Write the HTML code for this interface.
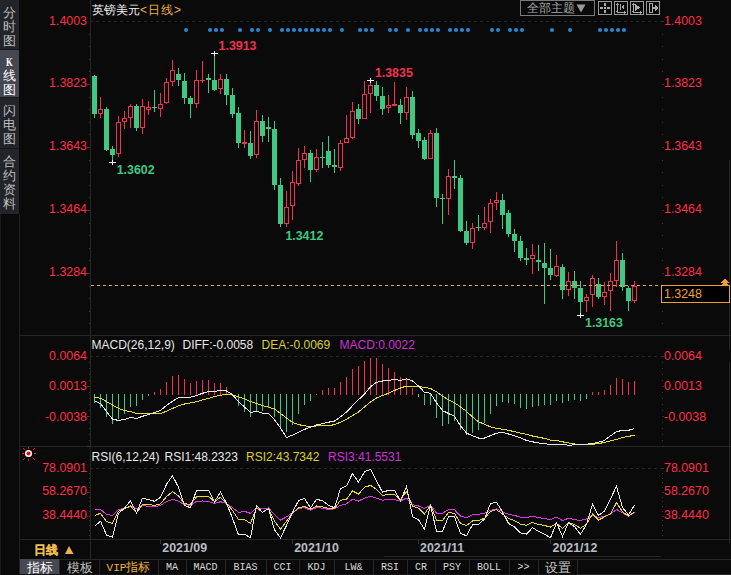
<!DOCTYPE html>
<html><head><meta charset="utf-8"><style>
html,body{margin:0;padding:0;background:#0a0a0a;}
#root{position:relative;width:731px;height:575px;overflow:hidden;background:#0a0a0a;font-family:"Liberation Sans", sans-serif;}
.t{position:absolute;white-space:nowrap;line-height:14px;}
svg{display:block}
</style></head><body><div id="root">
<svg style="position:absolute;left:0;top:0" width="731" height="575" shape-rendering="crispEdges">
<rect x="0" y="0" width="19" height="214" fill="#23242a"/>
<rect x="0" y="49" width="19" height="1" fill="#17181c"/>
<rect x="0" y="50" width="19" height="47" fill="#454752"/>
<rect x="0" y="97" width="19" height="1" fill="#17181c"/>
<rect x="0" y="148" width="19" height="1" fill="#17181c"/>
<rect x="0" y="214" width="1" height="361" fill="#1c1c1c"/>
<rect x="19" y="214" width="1" height="361" fill="#222222"/>
<rect x="90" y="0" width="1" height="559" fill="#262626"/>
<rect x="19" y="335" width="712" height="1" fill="#262626"/>
<rect x="19" y="446" width="712" height="1" fill="#262626"/>
<rect x="19" y="539" width="712" height="1" fill="#262626"/>
<rect x="19" y="559" width="712" height="1" fill="#262626"/>
<rect x="384" y="556" width="277" height="1" fill="#262626"/>
<rect x="729" y="160" width="1" height="190" fill="#262626"/>
<rect x="729" y="362" width="1" height="181" fill="#262626"/>
<rect x="577" y="574" width="154" height="1" fill="#262626"/>
<rect x="90" y="21" width="3" height="1" fill="#262626"/>
<rect x="96" y="21" width="3" height="1" fill="#262626"/>
<rect x="102" y="21" width="3" height="1" fill="#262626"/>
<rect x="108" y="21" width="3" height="1" fill="#262626"/>
<rect x="114" y="21" width="3" height="1" fill="#262626"/>
<rect x="120" y="21" width="3" height="1" fill="#262626"/>
<rect x="126" y="21" width="3" height="1" fill="#262626"/>
<rect x="132" y="21" width="3" height="1" fill="#262626"/>
<rect x="138" y="21" width="3" height="1" fill="#262626"/>
<rect x="144" y="21" width="3" height="1" fill="#262626"/>
<rect x="150" y="21" width="3" height="1" fill="#262626"/>
<rect x="156" y="21" width="3" height="1" fill="#262626"/>
<rect x="162" y="21" width="3" height="1" fill="#262626"/>
<rect x="168" y="21" width="3" height="1" fill="#262626"/>
<rect x="174" y="21" width="3" height="1" fill="#262626"/>
<rect x="180" y="21" width="3" height="1" fill="#262626"/>
<rect x="186" y="21" width="3" height="1" fill="#262626"/>
<rect x="192" y="21" width="3" height="1" fill="#262626"/>
<rect x="198" y="21" width="3" height="1" fill="#262626"/>
<rect x="204" y="21" width="3" height="1" fill="#262626"/>
<rect x="210" y="21" width="3" height="1" fill="#262626"/>
<rect x="216" y="21" width="3" height="1" fill="#262626"/>
<rect x="222" y="21" width="3" height="1" fill="#262626"/>
<rect x="228" y="21" width="3" height="1" fill="#262626"/>
<rect x="234" y="21" width="3" height="1" fill="#262626"/>
<rect x="240" y="21" width="3" height="1" fill="#262626"/>
<rect x="246" y="21" width="3" height="1" fill="#262626"/>
<rect x="252" y="21" width="3" height="1" fill="#262626"/>
<rect x="258" y="21" width="3" height="1" fill="#262626"/>
<rect x="264" y="21" width="3" height="1" fill="#262626"/>
<rect x="270" y="21" width="3" height="1" fill="#262626"/>
<rect x="276" y="21" width="3" height="1" fill="#262626"/>
<rect x="282" y="21" width="3" height="1" fill="#262626"/>
<rect x="288" y="21" width="3" height="1" fill="#262626"/>
<rect x="294" y="21" width="3" height="1" fill="#262626"/>
<rect x="300" y="21" width="3" height="1" fill="#262626"/>
<rect x="306" y="21" width="3" height="1" fill="#262626"/>
<rect x="312" y="21" width="3" height="1" fill="#262626"/>
<rect x="318" y="21" width="3" height="1" fill="#262626"/>
<rect x="324" y="21" width="3" height="1" fill="#262626"/>
<rect x="330" y="21" width="3" height="1" fill="#262626"/>
<rect x="336" y="21" width="3" height="1" fill="#262626"/>
<rect x="342" y="21" width="3" height="1" fill="#262626"/>
<rect x="348" y="21" width="3" height="1" fill="#262626"/>
<rect x="354" y="21" width="3" height="1" fill="#262626"/>
<rect x="360" y="21" width="3" height="1" fill="#262626"/>
<rect x="366" y="21" width="3" height="1" fill="#262626"/>
<rect x="372" y="21" width="3" height="1" fill="#262626"/>
<rect x="378" y="21" width="3" height="1" fill="#262626"/>
<rect x="384" y="21" width="3" height="1" fill="#262626"/>
<rect x="390" y="21" width="3" height="1" fill="#262626"/>
<rect x="396" y="21" width="3" height="1" fill="#262626"/>
<rect x="402" y="21" width="3" height="1" fill="#262626"/>
<rect x="408" y="21" width="3" height="1" fill="#262626"/>
<rect x="414" y="21" width="3" height="1" fill="#262626"/>
<rect x="420" y="21" width="3" height="1" fill="#262626"/>
<rect x="426" y="21" width="3" height="1" fill="#262626"/>
<rect x="432" y="21" width="3" height="1" fill="#262626"/>
<rect x="438" y="21" width="3" height="1" fill="#262626"/>
<rect x="444" y="21" width="3" height="1" fill="#262626"/>
<rect x="450" y="21" width="3" height="1" fill="#262626"/>
<rect x="456" y="21" width="3" height="1" fill="#262626"/>
<rect x="462" y="21" width="3" height="1" fill="#262626"/>
<rect x="468" y="21" width="3" height="1" fill="#262626"/>
<rect x="474" y="21" width="3" height="1" fill="#262626"/>
<rect x="480" y="21" width="3" height="1" fill="#262626"/>
<rect x="486" y="21" width="3" height="1" fill="#262626"/>
<rect x="492" y="21" width="3" height="1" fill="#262626"/>
<rect x="498" y="21" width="3" height="1" fill="#262626"/>
<rect x="504" y="21" width="3" height="1" fill="#262626"/>
<rect x="510" y="21" width="3" height="1" fill="#262626"/>
<rect x="516" y="21" width="3" height="1" fill="#262626"/>
<rect x="522" y="21" width="3" height="1" fill="#262626"/>
<rect x="528" y="21" width="3" height="1" fill="#262626"/>
<rect x="534" y="21" width="3" height="1" fill="#262626"/>
<rect x="540" y="21" width="3" height="1" fill="#262626"/>
<rect x="546" y="21" width="3" height="1" fill="#262626"/>
<rect x="552" y="21" width="3" height="1" fill="#262626"/>
<rect x="558" y="21" width="3" height="1" fill="#262626"/>
<rect x="564" y="21" width="3" height="1" fill="#262626"/>
<rect x="570" y="21" width="3" height="1" fill="#262626"/>
<rect x="576" y="21" width="3" height="1" fill="#262626"/>
<rect x="582" y="21" width="3" height="1" fill="#262626"/>
<rect x="588" y="21" width="3" height="1" fill="#262626"/>
<rect x="594" y="21" width="3" height="1" fill="#262626"/>
<rect x="600" y="21" width="3" height="1" fill="#262626"/>
<rect x="606" y="21" width="3" height="1" fill="#262626"/>
<rect x="612" y="21" width="3" height="1" fill="#262626"/>
<rect x="618" y="21" width="3" height="1" fill="#262626"/>
<rect x="624" y="21" width="3" height="1" fill="#262626"/>
<rect x="630" y="21" width="3" height="1" fill="#262626"/>
<rect x="636" y="21" width="3" height="1" fill="#262626"/>
<rect x="642" y="21" width="3" height="1" fill="#262626"/>
<rect x="648" y="21" width="3" height="1" fill="#262626"/>
<rect x="654" y="21" width="3" height="1" fill="#262626"/>
<rect x="660" y="21" width="3" height="1" fill="#262626"/>
<rect x="90" y="356" width="3" height="1" fill="#262626"/>
<rect x="96" y="356" width="3" height="1" fill="#262626"/>
<rect x="102" y="356" width="3" height="1" fill="#262626"/>
<rect x="108" y="356" width="3" height="1" fill="#262626"/>
<rect x="114" y="356" width="3" height="1" fill="#262626"/>
<rect x="120" y="356" width="3" height="1" fill="#262626"/>
<rect x="126" y="356" width="3" height="1" fill="#262626"/>
<rect x="132" y="356" width="3" height="1" fill="#262626"/>
<rect x="138" y="356" width="3" height="1" fill="#262626"/>
<rect x="144" y="356" width="3" height="1" fill="#262626"/>
<rect x="150" y="356" width="3" height="1" fill="#262626"/>
<rect x="156" y="356" width="3" height="1" fill="#262626"/>
<rect x="162" y="356" width="3" height="1" fill="#262626"/>
<rect x="168" y="356" width="3" height="1" fill="#262626"/>
<rect x="174" y="356" width="3" height="1" fill="#262626"/>
<rect x="180" y="356" width="3" height="1" fill="#262626"/>
<rect x="186" y="356" width="3" height="1" fill="#262626"/>
<rect x="192" y="356" width="3" height="1" fill="#262626"/>
<rect x="198" y="356" width="3" height="1" fill="#262626"/>
<rect x="204" y="356" width="3" height="1" fill="#262626"/>
<rect x="210" y="356" width="3" height="1" fill="#262626"/>
<rect x="216" y="356" width="3" height="1" fill="#262626"/>
<rect x="222" y="356" width="3" height="1" fill="#262626"/>
<rect x="228" y="356" width="3" height="1" fill="#262626"/>
<rect x="234" y="356" width="3" height="1" fill="#262626"/>
<rect x="240" y="356" width="3" height="1" fill="#262626"/>
<rect x="246" y="356" width="3" height="1" fill="#262626"/>
<rect x="252" y="356" width="3" height="1" fill="#262626"/>
<rect x="258" y="356" width="3" height="1" fill="#262626"/>
<rect x="264" y="356" width="3" height="1" fill="#262626"/>
<rect x="270" y="356" width="3" height="1" fill="#262626"/>
<rect x="276" y="356" width="3" height="1" fill="#262626"/>
<rect x="282" y="356" width="3" height="1" fill="#262626"/>
<rect x="288" y="356" width="3" height="1" fill="#262626"/>
<rect x="294" y="356" width="3" height="1" fill="#262626"/>
<rect x="300" y="356" width="3" height="1" fill="#262626"/>
<rect x="306" y="356" width="3" height="1" fill="#262626"/>
<rect x="312" y="356" width="3" height="1" fill="#262626"/>
<rect x="318" y="356" width="3" height="1" fill="#262626"/>
<rect x="324" y="356" width="3" height="1" fill="#262626"/>
<rect x="330" y="356" width="3" height="1" fill="#262626"/>
<rect x="336" y="356" width="3" height="1" fill="#262626"/>
<rect x="342" y="356" width="3" height="1" fill="#262626"/>
<rect x="348" y="356" width="3" height="1" fill="#262626"/>
<rect x="354" y="356" width="3" height="1" fill="#262626"/>
<rect x="360" y="356" width="3" height="1" fill="#262626"/>
<rect x="366" y="356" width="3" height="1" fill="#262626"/>
<rect x="372" y="356" width="3" height="1" fill="#262626"/>
<rect x="378" y="356" width="3" height="1" fill="#262626"/>
<rect x="384" y="356" width="3" height="1" fill="#262626"/>
<rect x="390" y="356" width="3" height="1" fill="#262626"/>
<rect x="396" y="356" width="3" height="1" fill="#262626"/>
<rect x="402" y="356" width="3" height="1" fill="#262626"/>
<rect x="408" y="356" width="3" height="1" fill="#262626"/>
<rect x="414" y="356" width="3" height="1" fill="#262626"/>
<rect x="420" y="356" width="3" height="1" fill="#262626"/>
<rect x="426" y="356" width="3" height="1" fill="#262626"/>
<rect x="432" y="356" width="3" height="1" fill="#262626"/>
<rect x="438" y="356" width="3" height="1" fill="#262626"/>
<rect x="444" y="356" width="3" height="1" fill="#262626"/>
<rect x="450" y="356" width="3" height="1" fill="#262626"/>
<rect x="456" y="356" width="3" height="1" fill="#262626"/>
<rect x="462" y="356" width="3" height="1" fill="#262626"/>
<rect x="468" y="356" width="3" height="1" fill="#262626"/>
<rect x="474" y="356" width="3" height="1" fill="#262626"/>
<rect x="480" y="356" width="3" height="1" fill="#262626"/>
<rect x="486" y="356" width="3" height="1" fill="#262626"/>
<rect x="492" y="356" width="3" height="1" fill="#262626"/>
<rect x="498" y="356" width="3" height="1" fill="#262626"/>
<rect x="504" y="356" width="3" height="1" fill="#262626"/>
<rect x="510" y="356" width="3" height="1" fill="#262626"/>
<rect x="516" y="356" width="3" height="1" fill="#262626"/>
<rect x="522" y="356" width="3" height="1" fill="#262626"/>
<rect x="528" y="356" width="3" height="1" fill="#262626"/>
<rect x="534" y="356" width="3" height="1" fill="#262626"/>
<rect x="540" y="356" width="3" height="1" fill="#262626"/>
<rect x="546" y="356" width="3" height="1" fill="#262626"/>
<rect x="552" y="356" width="3" height="1" fill="#262626"/>
<rect x="558" y="356" width="3" height="1" fill="#262626"/>
<rect x="564" y="356" width="3" height="1" fill="#262626"/>
<rect x="570" y="356" width="3" height="1" fill="#262626"/>
<rect x="576" y="356" width="3" height="1" fill="#262626"/>
<rect x="582" y="356" width="3" height="1" fill="#262626"/>
<rect x="588" y="356" width="3" height="1" fill="#262626"/>
<rect x="594" y="356" width="3" height="1" fill="#262626"/>
<rect x="600" y="356" width="3" height="1" fill="#262626"/>
<rect x="606" y="356" width="3" height="1" fill="#262626"/>
<rect x="612" y="356" width="3" height="1" fill="#262626"/>
<rect x="618" y="356" width="3" height="1" fill="#262626"/>
<rect x="624" y="356" width="3" height="1" fill="#262626"/>
<rect x="630" y="356" width="3" height="1" fill="#262626"/>
<rect x="636" y="356" width="3" height="1" fill="#262626"/>
<rect x="642" y="356" width="3" height="1" fill="#262626"/>
<rect x="648" y="356" width="3" height="1" fill="#262626"/>
<rect x="654" y="356" width="3" height="1" fill="#262626"/>
<rect x="660" y="356" width="3" height="1" fill="#262626"/>
<rect x="90" y="468" width="3" height="1" fill="#262626"/>
<rect x="96" y="468" width="3" height="1" fill="#262626"/>
<rect x="102" y="468" width="3" height="1" fill="#262626"/>
<rect x="108" y="468" width="3" height="1" fill="#262626"/>
<rect x="114" y="468" width="3" height="1" fill="#262626"/>
<rect x="120" y="468" width="3" height="1" fill="#262626"/>
<rect x="126" y="468" width="3" height="1" fill="#262626"/>
<rect x="132" y="468" width="3" height="1" fill="#262626"/>
<rect x="138" y="468" width="3" height="1" fill="#262626"/>
<rect x="144" y="468" width="3" height="1" fill="#262626"/>
<rect x="150" y="468" width="3" height="1" fill="#262626"/>
<rect x="156" y="468" width="3" height="1" fill="#262626"/>
<rect x="162" y="468" width="3" height="1" fill="#262626"/>
<rect x="168" y="468" width="3" height="1" fill="#262626"/>
<rect x="174" y="468" width="3" height="1" fill="#262626"/>
<rect x="180" y="468" width="3" height="1" fill="#262626"/>
<rect x="186" y="468" width="3" height="1" fill="#262626"/>
<rect x="192" y="468" width="3" height="1" fill="#262626"/>
<rect x="198" y="468" width="3" height="1" fill="#262626"/>
<rect x="204" y="468" width="3" height="1" fill="#262626"/>
<rect x="210" y="468" width="3" height="1" fill="#262626"/>
<rect x="216" y="468" width="3" height="1" fill="#262626"/>
<rect x="222" y="468" width="3" height="1" fill="#262626"/>
<rect x="228" y="468" width="3" height="1" fill="#262626"/>
<rect x="234" y="468" width="3" height="1" fill="#262626"/>
<rect x="240" y="468" width="3" height="1" fill="#262626"/>
<rect x="246" y="468" width="3" height="1" fill="#262626"/>
<rect x="252" y="468" width="3" height="1" fill="#262626"/>
<rect x="258" y="468" width="3" height="1" fill="#262626"/>
<rect x="264" y="468" width="3" height="1" fill="#262626"/>
<rect x="270" y="468" width="3" height="1" fill="#262626"/>
<rect x="276" y="468" width="3" height="1" fill="#262626"/>
<rect x="282" y="468" width="3" height="1" fill="#262626"/>
<rect x="288" y="468" width="3" height="1" fill="#262626"/>
<rect x="294" y="468" width="3" height="1" fill="#262626"/>
<rect x="300" y="468" width="3" height="1" fill="#262626"/>
<rect x="306" y="468" width="3" height="1" fill="#262626"/>
<rect x="312" y="468" width="3" height="1" fill="#262626"/>
<rect x="318" y="468" width="3" height="1" fill="#262626"/>
<rect x="324" y="468" width="3" height="1" fill="#262626"/>
<rect x="330" y="468" width="3" height="1" fill="#262626"/>
<rect x="336" y="468" width="3" height="1" fill="#262626"/>
<rect x="342" y="468" width="3" height="1" fill="#262626"/>
<rect x="348" y="468" width="3" height="1" fill="#262626"/>
<rect x="354" y="468" width="3" height="1" fill="#262626"/>
<rect x="360" y="468" width="3" height="1" fill="#262626"/>
<rect x="366" y="468" width="3" height="1" fill="#262626"/>
<rect x="372" y="468" width="3" height="1" fill="#262626"/>
<rect x="378" y="468" width="3" height="1" fill="#262626"/>
<rect x="384" y="468" width="3" height="1" fill="#262626"/>
<rect x="390" y="468" width="3" height="1" fill="#262626"/>
<rect x="396" y="468" width="3" height="1" fill="#262626"/>
<rect x="402" y="468" width="3" height="1" fill="#262626"/>
<rect x="408" y="468" width="3" height="1" fill="#262626"/>
<rect x="414" y="468" width="3" height="1" fill="#262626"/>
<rect x="420" y="468" width="3" height="1" fill="#262626"/>
<rect x="426" y="468" width="3" height="1" fill="#262626"/>
<rect x="432" y="468" width="3" height="1" fill="#262626"/>
<rect x="438" y="468" width="3" height="1" fill="#262626"/>
<rect x="444" y="468" width="3" height="1" fill="#262626"/>
<rect x="450" y="468" width="3" height="1" fill="#262626"/>
<rect x="456" y="468" width="3" height="1" fill="#262626"/>
<rect x="462" y="468" width="3" height="1" fill="#262626"/>
<rect x="468" y="468" width="3" height="1" fill="#262626"/>
<rect x="474" y="468" width="3" height="1" fill="#262626"/>
<rect x="480" y="468" width="3" height="1" fill="#262626"/>
<rect x="486" y="468" width="3" height="1" fill="#262626"/>
<rect x="492" y="468" width="3" height="1" fill="#262626"/>
<rect x="498" y="468" width="3" height="1" fill="#262626"/>
<rect x="504" y="468" width="3" height="1" fill="#262626"/>
<rect x="510" y="468" width="3" height="1" fill="#262626"/>
<rect x="516" y="468" width="3" height="1" fill="#262626"/>
<rect x="522" y="468" width="3" height="1" fill="#262626"/>
<rect x="528" y="468" width="3" height="1" fill="#262626"/>
<rect x="534" y="468" width="3" height="1" fill="#262626"/>
<rect x="540" y="468" width="3" height="1" fill="#262626"/>
<rect x="546" y="468" width="3" height="1" fill="#262626"/>
<rect x="552" y="468" width="3" height="1" fill="#262626"/>
<rect x="558" y="468" width="3" height="1" fill="#262626"/>
<rect x="564" y="468" width="3" height="1" fill="#262626"/>
<rect x="570" y="468" width="3" height="1" fill="#262626"/>
<rect x="576" y="468" width="3" height="1" fill="#262626"/>
<rect x="582" y="468" width="3" height="1" fill="#262626"/>
<rect x="588" y="468" width="3" height="1" fill="#262626"/>
<rect x="594" y="468" width="3" height="1" fill="#262626"/>
<rect x="600" y="468" width="3" height="1" fill="#262626"/>
<rect x="606" y="468" width="3" height="1" fill="#262626"/>
<rect x="612" y="468" width="3" height="1" fill="#262626"/>
<rect x="618" y="468" width="3" height="1" fill="#262626"/>
<rect x="624" y="468" width="3" height="1" fill="#262626"/>
<rect x="630" y="468" width="3" height="1" fill="#262626"/>
<rect x="636" y="468" width="3" height="1" fill="#262626"/>
<rect x="642" y="468" width="3" height="1" fill="#262626"/>
<rect x="648" y="468" width="3" height="1" fill="#262626"/>
<rect x="654" y="468" width="3" height="1" fill="#262626"/>
<rect x="660" y="468" width="3" height="1" fill="#262626"/>
<rect x="662" y="21" width="2" height="1" fill="#333333"/>
<rect x="89" y="34" width="1" height="1" fill="#3a3a3a"/>
<rect x="662" y="34" width="1" height="1" fill="#3a3a3a"/>
<rect x="89" y="46" width="1" height="1" fill="#3a3a3a"/>
<rect x="662" y="46" width="1" height="1" fill="#3a3a3a"/>
<rect x="89" y="59" width="1" height="1" fill="#3a3a3a"/>
<rect x="662" y="59" width="1" height="1" fill="#3a3a3a"/>
<rect x="89" y="71" width="1" height="1" fill="#3a3a3a"/>
<rect x="662" y="71" width="1" height="1" fill="#3a3a3a"/>
<rect x="87" y="84" width="3" height="1" fill="#3a3a3a"/>
<rect x="662" y="84" width="2" height="1" fill="#333333"/>
<rect x="89" y="97" width="1" height="1" fill="#3a3a3a"/>
<rect x="662" y="97" width="1" height="1" fill="#3a3a3a"/>
<rect x="89" y="109" width="1" height="1" fill="#3a3a3a"/>
<rect x="662" y="109" width="1" height="1" fill="#3a3a3a"/>
<rect x="89" y="122" width="1" height="1" fill="#3a3a3a"/>
<rect x="662" y="122" width="1" height="1" fill="#3a3a3a"/>
<rect x="89" y="134" width="1" height="1" fill="#3a3a3a"/>
<rect x="662" y="134" width="1" height="1" fill="#3a3a3a"/>
<rect x="87" y="147" width="3" height="1" fill="#3a3a3a"/>
<rect x="662" y="147" width="2" height="1" fill="#333333"/>
<rect x="89" y="160" width="1" height="1" fill="#3a3a3a"/>
<rect x="662" y="160" width="1" height="1" fill="#3a3a3a"/>
<rect x="89" y="172" width="1" height="1" fill="#3a3a3a"/>
<rect x="662" y="172" width="1" height="1" fill="#3a3a3a"/>
<rect x="89" y="185" width="1" height="1" fill="#3a3a3a"/>
<rect x="662" y="185" width="1" height="1" fill="#3a3a3a"/>
<rect x="89" y="197" width="1" height="1" fill="#3a3a3a"/>
<rect x="662" y="197" width="1" height="1" fill="#3a3a3a"/>
<rect x="87" y="210" width="3" height="1" fill="#3a3a3a"/>
<rect x="662" y="210" width="2" height="1" fill="#333333"/>
<rect x="89" y="223" width="1" height="1" fill="#3a3a3a"/>
<rect x="662" y="223" width="1" height="1" fill="#3a3a3a"/>
<rect x="89" y="235" width="1" height="1" fill="#3a3a3a"/>
<rect x="662" y="235" width="1" height="1" fill="#3a3a3a"/>
<rect x="89" y="248" width="1" height="1" fill="#3a3a3a"/>
<rect x="662" y="248" width="1" height="1" fill="#3a3a3a"/>
<rect x="89" y="260" width="1" height="1" fill="#3a3a3a"/>
<rect x="662" y="260" width="1" height="1" fill="#3a3a3a"/>
<rect x="87" y="273" width="3" height="1" fill="#3a3a3a"/>
<rect x="662" y="273" width="2" height="1" fill="#333333"/>
<rect x="89" y="286" width="1" height="1" fill="#3a3a3a"/>
<rect x="662" y="286" width="1" height="1" fill="#3a3a3a"/>
<rect x="89" y="298" width="1" height="1" fill="#3a3a3a"/>
<rect x="662" y="298" width="1" height="1" fill="#3a3a3a"/>
<rect x="89" y="311" width="1" height="1" fill="#3a3a3a"/>
<rect x="662" y="311" width="1" height="1" fill="#3a3a3a"/>
<rect x="89" y="323" width="1" height="1" fill="#3a3a3a"/>
<rect x="662" y="323" width="1" height="1" fill="#3a3a3a"/>
<rect x="662" y="356" width="2" height="1" fill="#333333"/>
<rect x="89" y="362" width="1" height="1" fill="#3a3a3a"/>
<rect x="662" y="362" width="1" height="1" fill="#3a3a3a"/>
<rect x="89" y="368" width="1" height="1" fill="#3a3a3a"/>
<rect x="662" y="368" width="1" height="1" fill="#3a3a3a"/>
<rect x="89" y="374" width="1" height="1" fill="#3a3a3a"/>
<rect x="662" y="374" width="1" height="1" fill="#3a3a3a"/>
<rect x="89" y="380" width="1" height="1" fill="#3a3a3a"/>
<rect x="662" y="380" width="1" height="1" fill="#3a3a3a"/>
<rect x="87" y="386" width="3" height="1" fill="#3a3a3a"/>
<rect x="662" y="386" width="2" height="1" fill="#333333"/>
<rect x="89" y="392" width="1" height="1" fill="#3a3a3a"/>
<rect x="662" y="392" width="1" height="1" fill="#3a3a3a"/>
<rect x="89" y="398" width="1" height="1" fill="#3a3a3a"/>
<rect x="662" y="398" width="1" height="1" fill="#3a3a3a"/>
<rect x="89" y="404" width="1" height="1" fill="#3a3a3a"/>
<rect x="662" y="404" width="1" height="1" fill="#3a3a3a"/>
<rect x="89" y="410" width="1" height="1" fill="#3a3a3a"/>
<rect x="662" y="410" width="1" height="1" fill="#3a3a3a"/>
<rect x="87" y="416" width="3" height="1" fill="#3a3a3a"/>
<rect x="662" y="416" width="2" height="1" fill="#333333"/>
<rect x="89" y="422" width="1" height="1" fill="#3a3a3a"/>
<rect x="662" y="422" width="1" height="1" fill="#3a3a3a"/>
<rect x="89" y="428" width="1" height="1" fill="#3a3a3a"/>
<rect x="662" y="428" width="1" height="1" fill="#3a3a3a"/>
<rect x="89" y="434" width="1" height="1" fill="#3a3a3a"/>
<rect x="662" y="434" width="1" height="1" fill="#3a3a3a"/>
<rect x="89" y="440" width="1" height="1" fill="#3a3a3a"/>
<rect x="662" y="440" width="1" height="1" fill="#3a3a3a"/>
<rect x="87" y="446" width="3" height="1" fill="#3a3a3a"/>
<rect x="662" y="446" width="2" height="1" fill="#333333"/>
<rect x="662" y="468" width="2" height="1" fill="#333333"/>
<rect x="89" y="473" width="1" height="1" fill="#3a3a3a"/>
<rect x="662" y="473" width="1" height="1" fill="#3a3a3a"/>
<rect x="89" y="478" width="1" height="1" fill="#3a3a3a"/>
<rect x="662" y="478" width="1" height="1" fill="#3a3a3a"/>
<rect x="89" y="482" width="1" height="1" fill="#3a3a3a"/>
<rect x="662" y="482" width="1" height="1" fill="#3a3a3a"/>
<rect x="89" y="487" width="1" height="1" fill="#3a3a3a"/>
<rect x="662" y="487" width="1" height="1" fill="#3a3a3a"/>
<rect x="87" y="492" width="3" height="1" fill="#3a3a3a"/>
<rect x="662" y="492" width="2" height="1" fill="#333333"/>
<rect x="89" y="497" width="1" height="1" fill="#3a3a3a"/>
<rect x="662" y="497" width="1" height="1" fill="#3a3a3a"/>
<rect x="89" y="501" width="1" height="1" fill="#3a3a3a"/>
<rect x="662" y="501" width="1" height="1" fill="#3a3a3a"/>
<rect x="89" y="506" width="1" height="1" fill="#3a3a3a"/>
<rect x="662" y="506" width="1" height="1" fill="#3a3a3a"/>
<rect x="89" y="511" width="1" height="1" fill="#3a3a3a"/>
<rect x="662" y="511" width="1" height="1" fill="#3a3a3a"/>
<rect x="87" y="516" width="3" height="1" fill="#3a3a3a"/>
<rect x="662" y="516" width="2" height="1" fill="#333333"/>
<rect x="89" y="520" width="1" height="1" fill="#3a3a3a"/>
<rect x="662" y="520" width="1" height="1" fill="#3a3a3a"/>
<rect x="89" y="525" width="1" height="1" fill="#3a3a3a"/>
<rect x="662" y="525" width="1" height="1" fill="#3a3a3a"/>
<rect x="89" y="530" width="1" height="1" fill="#3a3a3a"/>
<rect x="662" y="530" width="1" height="1" fill="#3a3a3a"/>
<rect x="89" y="535" width="1" height="1" fill="#3a3a3a"/>
<rect x="662" y="535" width="1" height="1" fill="#3a3a3a"/>
<circle cx="186" cy="30" r="2" fill="#2a8ad8" shape-rendering="geometricPrecision"/>
<circle cx="210" cy="30" r="2" fill="#2a8ad8" shape-rendering="geometricPrecision"/>
<circle cx="216" cy="30" r="2" fill="#2a8ad8" shape-rendering="geometricPrecision"/>
<circle cx="222" cy="30" r="2" fill="#2a8ad8" shape-rendering="geometricPrecision"/>
<circle cx="240" cy="30" r="2" fill="#2a8ad8" shape-rendering="geometricPrecision"/>
<circle cx="252" cy="30" r="2" fill="#2a8ad8" shape-rendering="geometricPrecision"/>
<circle cx="258" cy="30" r="2" fill="#2a8ad8" shape-rendering="geometricPrecision"/>
<circle cx="270" cy="30" r="2" fill="#2a8ad8" shape-rendering="geometricPrecision"/>
<circle cx="282" cy="30" r="2" fill="#2a8ad8" shape-rendering="geometricPrecision"/>
<circle cx="288" cy="30" r="2" fill="#2a8ad8" shape-rendering="geometricPrecision"/>
<circle cx="294" cy="30" r="2" fill="#2a8ad8" shape-rendering="geometricPrecision"/>
<circle cx="300" cy="30" r="2" fill="#2a8ad8" shape-rendering="geometricPrecision"/>
<circle cx="306" cy="30" r="2" fill="#2a8ad8" shape-rendering="geometricPrecision"/>
<circle cx="312" cy="30" r="2" fill="#2a8ad8" shape-rendering="geometricPrecision"/>
<circle cx="318" cy="30" r="2" fill="#2a8ad8" shape-rendering="geometricPrecision"/>
<circle cx="324" cy="30" r="2" fill="#2a8ad8" shape-rendering="geometricPrecision"/>
<circle cx="330" cy="30" r="2" fill="#2a8ad8" shape-rendering="geometricPrecision"/>
<circle cx="342" cy="30" r="2" fill="#2a8ad8" shape-rendering="geometricPrecision"/>
<circle cx="360" cy="30" r="2" fill="#2a8ad8" shape-rendering="geometricPrecision"/>
<circle cx="366" cy="30" r="2" fill="#2a8ad8" shape-rendering="geometricPrecision"/>
<circle cx="372" cy="30" r="2" fill="#2a8ad8" shape-rendering="geometricPrecision"/>
<circle cx="390" cy="30" r="2" fill="#2a8ad8" shape-rendering="geometricPrecision"/>
<circle cx="396" cy="30" r="2" fill="#2a8ad8" shape-rendering="geometricPrecision"/>
<circle cx="408" cy="30" r="2" fill="#2a8ad8" shape-rendering="geometricPrecision"/>
<circle cx="420" cy="30" r="2" fill="#2a8ad8" shape-rendering="geometricPrecision"/>
<circle cx="426" cy="30" r="2" fill="#2a8ad8" shape-rendering="geometricPrecision"/>
<circle cx="432" cy="30" r="2" fill="#2a8ad8" shape-rendering="geometricPrecision"/>
<circle cx="438" cy="30" r="2" fill="#2a8ad8" shape-rendering="geometricPrecision"/>
<circle cx="450" cy="30" r="2" fill="#2a8ad8" shape-rendering="geometricPrecision"/>
<circle cx="456" cy="30" r="2" fill="#2a8ad8" shape-rendering="geometricPrecision"/>
<circle cx="462" cy="30" r="2" fill="#2a8ad8" shape-rendering="geometricPrecision"/>
<circle cx="468" cy="30" r="2" fill="#2a8ad8" shape-rendering="geometricPrecision"/>
<circle cx="492" cy="30" r="2" fill="#2a8ad8" shape-rendering="geometricPrecision"/>
<circle cx="498" cy="30" r="2" fill="#2a8ad8" shape-rendering="geometricPrecision"/>
<circle cx="510" cy="30" r="2" fill="#2a8ad8" shape-rendering="geometricPrecision"/>
<circle cx="516" cy="30" r="2" fill="#2a8ad8" shape-rendering="geometricPrecision"/>
<circle cx="522" cy="30" r="2" fill="#2a8ad8" shape-rendering="geometricPrecision"/>
<circle cx="552" cy="30" r="2" fill="#2a8ad8" shape-rendering="geometricPrecision"/>
<circle cx="570" cy="30" r="2" fill="#2a8ad8" shape-rendering="geometricPrecision"/>
<circle cx="600" cy="30" r="2" fill="#2a8ad8" shape-rendering="geometricPrecision"/>
<circle cx="606" cy="30" r="2" fill="#2a8ad8" shape-rendering="geometricPrecision"/>
<circle cx="612" cy="30" r="2" fill="#2a8ad8" shape-rendering="geometricPrecision"/>
<circle cx="618" cy="30" r="2" fill="#2a8ad8" shape-rendering="geometricPrecision"/>
<circle cx="624" cy="30" r="2" fill="#2a8ad8" shape-rendering="geometricPrecision"/>
<rect x="94" y="75" width="1" height="1" fill="#3ec882"/>
<rect x="94" y="114" width="1" height="4" fill="#3ec882"/>
<rect x="92" y="76" width="5" height="38" fill="#3ec882"/>
<rect x="100" y="97" width="1" height="12" fill="#f0324c"/>
<rect x="100" y="114" width="1" height="4" fill="#f0324c"/>
<rect x="98" y="109" width="5" height="1" fill="#f0324c"/>
<rect x="98" y="113" width="5" height="1" fill="#f0324c"/>
<rect x="98" y="109" width="1" height="5" fill="#f0324c"/>
<rect x="102" y="109" width="1" height="5" fill="#f0324c"/>
<rect x="106" y="107" width="1" height="2" fill="#3ec882"/>
<rect x="106" y="150" width="1" height="1" fill="#3ec882"/>
<rect x="104" y="109" width="5" height="41" fill="#3ec882"/>
<rect x="112" y="146" width="1" height="3" fill="#3ec882"/>
<rect x="112" y="155" width="1" height="7" fill="#3ec882"/>
<rect x="110" y="149" width="5" height="6" fill="#3ec882"/>
<rect x="118" y="116" width="1" height="6" fill="#f0324c"/>
<rect x="118" y="154" width="1" height="3" fill="#f0324c"/>
<rect x="116" y="122" width="5" height="1" fill="#f0324c"/>
<rect x="116" y="153" width="5" height="1" fill="#f0324c"/>
<rect x="116" y="122" width="1" height="32" fill="#f0324c"/>
<rect x="120" y="122" width="1" height="32" fill="#f0324c"/>
<rect x="124" y="111" width="1" height="7" fill="#f0324c"/>
<rect x="124" y="122" width="1" height="7" fill="#f0324c"/>
<rect x="122" y="118" width="5" height="1" fill="#f0324c"/>
<rect x="122" y="121" width="5" height="1" fill="#f0324c"/>
<rect x="122" y="118" width="1" height="4" fill="#f0324c"/>
<rect x="126" y="118" width="1" height="4" fill="#f0324c"/>
<rect x="130" y="104" width="1" height="2" fill="#f0324c"/>
<rect x="130" y="118" width="1" height="10" fill="#f0324c"/>
<rect x="128" y="106" width="5" height="1" fill="#f0324c"/>
<rect x="128" y="117" width="5" height="1" fill="#f0324c"/>
<rect x="128" y="106" width="1" height="12" fill="#f0324c"/>
<rect x="132" y="106" width="1" height="12" fill="#f0324c"/>
<rect x="136" y="104" width="1" height="2" fill="#3ec882"/>
<rect x="136" y="128" width="1" height="3" fill="#3ec882"/>
<rect x="134" y="106" width="5" height="22" fill="#3ec882"/>
<rect x="142" y="99" width="1" height="7" fill="#f0324c"/>
<rect x="142" y="128" width="1" height="6" fill="#f0324c"/>
<rect x="140" y="106" width="5" height="1" fill="#f0324c"/>
<rect x="140" y="127" width="5" height="1" fill="#f0324c"/>
<rect x="140" y="106" width="1" height="22" fill="#f0324c"/>
<rect x="144" y="106" width="1" height="22" fill="#f0324c"/>
<rect x="148" y="101" width="1" height="6" fill="#f0324c"/>
<rect x="148" y="110" width="1" height="5" fill="#f0324c"/>
<rect x="146" y="107" width="5" height="1" fill="#f0324c"/>
<rect x="146" y="109" width="5" height="1" fill="#f0324c"/>
<rect x="146" y="107" width="1" height="3" fill="#f0324c"/>
<rect x="150" y="107" width="1" height="3" fill="#f0324c"/>
<rect x="154" y="90" width="1" height="17" fill="#3ec882"/>
<rect x="154" y="108" width="1" height="4" fill="#3ec882"/>
<rect x="152" y="107" width="5" height="1" fill="#3ec882"/>
<rect x="160" y="93" width="1" height="11" fill="#f0324c"/>
<rect x="160" y="109" width="1" height="8" fill="#f0324c"/>
<rect x="158" y="104" width="5" height="1" fill="#f0324c"/>
<rect x="158" y="108" width="5" height="1" fill="#f0324c"/>
<rect x="158" y="104" width="1" height="5" fill="#f0324c"/>
<rect x="162" y="104" width="1" height="5" fill="#f0324c"/>
<rect x="166" y="78" width="1" height="4" fill="#f0324c"/>
<rect x="166" y="103" width="1" height="1" fill="#f0324c"/>
<rect x="164" y="82" width="5" height="1" fill="#f0324c"/>
<rect x="164" y="102" width="5" height="1" fill="#f0324c"/>
<rect x="164" y="82" width="1" height="21" fill="#f0324c"/>
<rect x="168" y="82" width="1" height="21" fill="#f0324c"/>
<rect x="172" y="60" width="1" height="10" fill="#f0324c"/>
<rect x="172" y="82" width="1" height="4" fill="#f0324c"/>
<rect x="170" y="70" width="5" height="1" fill="#f0324c"/>
<rect x="170" y="81" width="5" height="1" fill="#f0324c"/>
<rect x="170" y="70" width="1" height="12" fill="#f0324c"/>
<rect x="174" y="70" width="1" height="12" fill="#f0324c"/>
<rect x="178" y="68" width="1" height="6" fill="#3ec882"/>
<rect x="178" y="80" width="1" height="6" fill="#3ec882"/>
<rect x="176" y="74" width="5" height="6" fill="#3ec882"/>
<rect x="184" y="73" width="1" height="8" fill="#3ec882"/>
<rect x="184" y="98" width="1" height="6" fill="#3ec882"/>
<rect x="182" y="81" width="5" height="17" fill="#3ec882"/>
<rect x="190" y="96" width="1" height="2" fill="#3ec882"/>
<rect x="190" y="104" width="1" height="14" fill="#3ec882"/>
<rect x="188" y="98" width="5" height="6" fill="#3ec882"/>
<rect x="196" y="70" width="1" height="10" fill="#f0324c"/>
<rect x="196" y="104" width="1" height="4" fill="#f0324c"/>
<rect x="194" y="80" width="5" height="1" fill="#f0324c"/>
<rect x="194" y="103" width="5" height="1" fill="#f0324c"/>
<rect x="194" y="80" width="1" height="24" fill="#f0324c"/>
<rect x="198" y="80" width="1" height="24" fill="#f0324c"/>
<rect x="202" y="61" width="1" height="19" fill="#f0324c"/>
<rect x="202" y="81" width="1" height="2" fill="#f0324c"/>
<rect x="200" y="80" width="5" height="1" fill="#f0324c"/>
<rect x="208" y="74" width="1" height="4" fill="#3ec882"/>
<rect x="208" y="80" width="1" height="13" fill="#3ec882"/>
<rect x="206" y="78" width="5" height="2" fill="#3ec882"/>
<rect x="214" y="53" width="1" height="27" fill="#3ec882"/>
<rect x="214" y="90" width="1" height="1" fill="#3ec882"/>
<rect x="212" y="80" width="5" height="10" fill="#3ec882"/>
<rect x="220" y="74" width="1" height="5" fill="#f0324c"/>
<rect x="220" y="89" width="1" height="5" fill="#f0324c"/>
<rect x="218" y="79" width="5" height="1" fill="#f0324c"/>
<rect x="218" y="88" width="5" height="1" fill="#f0324c"/>
<rect x="218" y="79" width="1" height="10" fill="#f0324c"/>
<rect x="222" y="79" width="1" height="10" fill="#f0324c"/>
<rect x="226" y="74" width="1" height="5" fill="#3ec882"/>
<rect x="226" y="95" width="1" height="10" fill="#3ec882"/>
<rect x="224" y="79" width="5" height="16" fill="#3ec882"/>
<rect x="232" y="88" width="1" height="7" fill="#3ec882"/>
<rect x="232" y="114" width="1" height="4" fill="#3ec882"/>
<rect x="230" y="95" width="5" height="19" fill="#3ec882"/>
<rect x="238" y="107" width="1" height="6" fill="#3ec882"/>
<rect x="238" y="143" width="1" height="5" fill="#3ec882"/>
<rect x="236" y="113" width="5" height="30" fill="#3ec882"/>
<rect x="244" y="130" width="1" height="12" fill="#f0324c"/>
<rect x="244" y="144" width="1" height="4" fill="#f0324c"/>
<rect x="242" y="142" width="5" height="2" fill="#f0324c"/>
<rect x="250" y="131" width="1" height="12" fill="#3ec882"/>
<rect x="250" y="156" width="1" height="3" fill="#3ec882"/>
<rect x="248" y="143" width="5" height="13" fill="#3ec882"/>
<rect x="256" y="110" width="1" height="11" fill="#f0324c"/>
<rect x="256" y="155" width="1" height="3" fill="#f0324c"/>
<rect x="254" y="121" width="5" height="1" fill="#f0324c"/>
<rect x="254" y="154" width="5" height="1" fill="#f0324c"/>
<rect x="254" y="121" width="1" height="34" fill="#f0324c"/>
<rect x="258" y="121" width="1" height="34" fill="#f0324c"/>
<rect x="262" y="115" width="1" height="6" fill="#3ec882"/>
<rect x="262" y="136" width="1" height="6" fill="#3ec882"/>
<rect x="260" y="121" width="5" height="15" fill="#3ec882"/>
<rect x="268" y="117" width="1" height="10" fill="#3ec882"/>
<rect x="268" y="129" width="1" height="13" fill="#3ec882"/>
<rect x="266" y="127" width="5" height="2" fill="#3ec882"/>
<rect x="274" y="121" width="1" height="8" fill="#3ec882"/>
<rect x="274" y="185" width="1" height="5" fill="#3ec882"/>
<rect x="272" y="129" width="5" height="56" fill="#3ec882"/>
<rect x="280" y="178" width="1" height="7" fill="#3ec882"/>
<rect x="280" y="224" width="1" height="3" fill="#3ec882"/>
<rect x="278" y="185" width="5" height="39" fill="#3ec882"/>
<rect x="286" y="191" width="1" height="16" fill="#f0324c"/>
<rect x="286" y="224" width="1" height="3" fill="#f0324c"/>
<rect x="284" y="207" width="5" height="1" fill="#f0324c"/>
<rect x="284" y="223" width="5" height="1" fill="#f0324c"/>
<rect x="284" y="207" width="1" height="17" fill="#f0324c"/>
<rect x="288" y="207" width="1" height="17" fill="#f0324c"/>
<rect x="292" y="171" width="1" height="11" fill="#f0324c"/>
<rect x="292" y="206" width="1" height="14" fill="#f0324c"/>
<rect x="290" y="182" width="5" height="1" fill="#f0324c"/>
<rect x="290" y="205" width="5" height="1" fill="#f0324c"/>
<rect x="290" y="182" width="1" height="24" fill="#f0324c"/>
<rect x="294" y="182" width="1" height="24" fill="#f0324c"/>
<rect x="298" y="148" width="1" height="12" fill="#f0324c"/>
<rect x="298" y="184" width="1" height="2" fill="#f0324c"/>
<rect x="296" y="160" width="5" height="1" fill="#f0324c"/>
<rect x="296" y="183" width="5" height="1" fill="#f0324c"/>
<rect x="296" y="160" width="1" height="24" fill="#f0324c"/>
<rect x="300" y="160" width="1" height="24" fill="#f0324c"/>
<rect x="304" y="146" width="1" height="7" fill="#f0324c"/>
<rect x="304" y="160" width="1" height="8" fill="#f0324c"/>
<rect x="302" y="153" width="5" height="1" fill="#f0324c"/>
<rect x="302" y="159" width="5" height="1" fill="#f0324c"/>
<rect x="302" y="153" width="1" height="7" fill="#f0324c"/>
<rect x="306" y="153" width="1" height="7" fill="#f0324c"/>
<rect x="310" y="150" width="1" height="3" fill="#3ec882"/>
<rect x="310" y="170" width="1" height="12" fill="#3ec882"/>
<rect x="308" y="153" width="5" height="17" fill="#3ec882"/>
<rect x="316" y="149" width="1" height="8" fill="#f0324c"/>
<rect x="316" y="170" width="1" height="2" fill="#f0324c"/>
<rect x="314" y="157" width="5" height="1" fill="#f0324c"/>
<rect x="314" y="169" width="5" height="1" fill="#f0324c"/>
<rect x="314" y="157" width="1" height="13" fill="#f0324c"/>
<rect x="318" y="157" width="1" height="13" fill="#f0324c"/>
<rect x="322" y="142" width="1" height="15" fill="#3ec882"/>
<rect x="322" y="158" width="1" height="10" fill="#3ec882"/>
<rect x="320" y="157" width="5" height="1" fill="#3ec882"/>
<rect x="328" y="136" width="1" height="15" fill="#3ec882"/>
<rect x="328" y="165" width="1" height="3" fill="#3ec882"/>
<rect x="326" y="151" width="5" height="14" fill="#3ec882"/>
<rect x="334" y="149" width="1" height="16" fill="#3ec882"/>
<rect x="334" y="167" width="1" height="6" fill="#3ec882"/>
<rect x="332" y="165" width="5" height="2" fill="#3ec882"/>
<rect x="340" y="140" width="1" height="3" fill="#f0324c"/>
<rect x="340" y="168" width="1" height="3" fill="#f0324c"/>
<rect x="338" y="143" width="5" height="1" fill="#f0324c"/>
<rect x="338" y="167" width="5" height="1" fill="#f0324c"/>
<rect x="338" y="143" width="1" height="25" fill="#f0324c"/>
<rect x="342" y="143" width="1" height="25" fill="#f0324c"/>
<rect x="346" y="115" width="1" height="23" fill="#f0324c"/>
<rect x="344" y="138" width="5" height="1" fill="#f0324c"/>
<rect x="344" y="142" width="5" height="1" fill="#f0324c"/>
<rect x="344" y="138" width="1" height="5" fill="#f0324c"/>
<rect x="348" y="138" width="1" height="5" fill="#f0324c"/>
<rect x="352" y="102" width="1" height="9" fill="#f0324c"/>
<rect x="352" y="138" width="1" height="1" fill="#f0324c"/>
<rect x="350" y="111" width="5" height="1" fill="#f0324c"/>
<rect x="350" y="137" width="5" height="1" fill="#f0324c"/>
<rect x="350" y="111" width="1" height="27" fill="#f0324c"/>
<rect x="354" y="111" width="1" height="27" fill="#f0324c"/>
<rect x="358" y="104" width="1" height="5" fill="#3ec882"/>
<rect x="358" y="119" width="1" height="5" fill="#3ec882"/>
<rect x="356" y="109" width="5" height="10" fill="#3ec882"/>
<rect x="364" y="81" width="1" height="13" fill="#f0324c"/>
<rect x="362" y="94" width="5" height="1" fill="#f0324c"/>
<rect x="362" y="118" width="5" height="1" fill="#f0324c"/>
<rect x="362" y="94" width="1" height="25" fill="#f0324c"/>
<rect x="366" y="94" width="1" height="25" fill="#f0324c"/>
<rect x="370" y="80" width="1" height="5" fill="#f0324c"/>
<rect x="370" y="94" width="1" height="19" fill="#f0324c"/>
<rect x="368" y="85" width="5" height="1" fill="#f0324c"/>
<rect x="368" y="93" width="5" height="1" fill="#f0324c"/>
<rect x="368" y="85" width="1" height="9" fill="#f0324c"/>
<rect x="372" y="85" width="1" height="9" fill="#f0324c"/>
<rect x="376" y="81" width="1" height="4" fill="#3ec882"/>
<rect x="376" y="96" width="1" height="5" fill="#3ec882"/>
<rect x="374" y="85" width="5" height="11" fill="#3ec882"/>
<rect x="382" y="87" width="1" height="9" fill="#3ec882"/>
<rect x="382" y="109" width="1" height="6" fill="#3ec882"/>
<rect x="380" y="96" width="5" height="13" fill="#3ec882"/>
<rect x="388" y="95" width="1" height="10" fill="#f0324c"/>
<rect x="388" y="108" width="1" height="5" fill="#f0324c"/>
<rect x="386" y="105" width="5" height="1" fill="#f0324c"/>
<rect x="386" y="107" width="5" height="1" fill="#f0324c"/>
<rect x="386" y="105" width="1" height="3" fill="#f0324c"/>
<rect x="390" y="105" width="1" height="3" fill="#f0324c"/>
<rect x="394" y="82" width="1" height="22" fill="#f0324c"/>
<rect x="392" y="104" width="5" height="2" fill="#f0324c"/>
<rect x="400" y="99" width="1" height="6" fill="#3ec882"/>
<rect x="400" y="113" width="1" height="11" fill="#3ec882"/>
<rect x="398" y="105" width="5" height="8" fill="#3ec882"/>
<rect x="406" y="87" width="1" height="10" fill="#f0324c"/>
<rect x="406" y="113" width="1" height="7" fill="#f0324c"/>
<rect x="404" y="97" width="5" height="1" fill="#f0324c"/>
<rect x="404" y="112" width="5" height="1" fill="#f0324c"/>
<rect x="404" y="97" width="1" height="16" fill="#f0324c"/>
<rect x="408" y="97" width="1" height="16" fill="#f0324c"/>
<rect x="412" y="91" width="1" height="6" fill="#3ec882"/>
<rect x="412" y="135" width="1" height="4" fill="#3ec882"/>
<rect x="410" y="97" width="5" height="38" fill="#3ec882"/>
<rect x="418" y="129" width="1" height="4" fill="#3ec882"/>
<rect x="418" y="141" width="1" height="7" fill="#3ec882"/>
<rect x="416" y="133" width="5" height="8" fill="#3ec882"/>
<rect x="424" y="137" width="1" height="3" fill="#3ec882"/>
<rect x="424" y="159" width="1" height="1" fill="#3ec882"/>
<rect x="422" y="140" width="5" height="19" fill="#3ec882"/>
<rect x="430" y="130" width="1" height="3" fill="#f0324c"/>
<rect x="428" y="133" width="5" height="1" fill="#f0324c"/>
<rect x="428" y="158" width="5" height="1" fill="#f0324c"/>
<rect x="428" y="133" width="1" height="26" fill="#f0324c"/>
<rect x="432" y="133" width="1" height="26" fill="#f0324c"/>
<rect x="436" y="128" width="1" height="5" fill="#3ec882"/>
<rect x="436" y="198" width="1" height="9" fill="#3ec882"/>
<rect x="434" y="133" width="5" height="65" fill="#3ec882"/>
<rect x="442" y="194" width="1" height="4" fill="#3ec882"/>
<rect x="442" y="199" width="1" height="25" fill="#3ec882"/>
<rect x="440" y="198" width="5" height="1" fill="#3ec882"/>
<rect x="448" y="169" width="1" height="7" fill="#f0324c"/>
<rect x="448" y="199" width="1" height="16" fill="#f0324c"/>
<rect x="446" y="176" width="5" height="1" fill="#f0324c"/>
<rect x="446" y="198" width="5" height="1" fill="#f0324c"/>
<rect x="446" y="176" width="1" height="23" fill="#f0324c"/>
<rect x="450" y="176" width="1" height="23" fill="#f0324c"/>
<rect x="454" y="160" width="1" height="16" fill="#3ec882"/>
<rect x="454" y="178" width="1" height="11" fill="#3ec882"/>
<rect x="452" y="176" width="5" height="2" fill="#3ec882"/>
<rect x="460" y="175" width="1" height="3" fill="#3ec882"/>
<rect x="460" y="231" width="1" height="1" fill="#3ec882"/>
<rect x="458" y="178" width="5" height="53" fill="#3ec882"/>
<rect x="466" y="221" width="1" height="10" fill="#3ec882"/>
<rect x="466" y="243" width="1" height="2" fill="#3ec882"/>
<rect x="464" y="231" width="5" height="12" fill="#3ec882"/>
<rect x="472" y="223" width="1" height="5" fill="#f0324c"/>
<rect x="472" y="243" width="1" height="6" fill="#f0324c"/>
<rect x="470" y="228" width="5" height="1" fill="#f0324c"/>
<rect x="470" y="242" width="5" height="1" fill="#f0324c"/>
<rect x="470" y="228" width="1" height="15" fill="#f0324c"/>
<rect x="474" y="228" width="1" height="15" fill="#f0324c"/>
<rect x="478" y="215" width="1" height="12" fill="#3ec882"/>
<rect x="478" y="228" width="1" height="3" fill="#3ec882"/>
<rect x="476" y="227" width="5" height="1" fill="#3ec882"/>
<rect x="484" y="207" width="1" height="16" fill="#f0324c"/>
<rect x="484" y="228" width="1" height="2" fill="#f0324c"/>
<rect x="482" y="223" width="5" height="1" fill="#f0324c"/>
<rect x="482" y="227" width="5" height="1" fill="#f0324c"/>
<rect x="482" y="223" width="1" height="5" fill="#f0324c"/>
<rect x="486" y="223" width="1" height="5" fill="#f0324c"/>
<rect x="490" y="199" width="1" height="4" fill="#f0324c"/>
<rect x="490" y="222" width="1" height="11" fill="#f0324c"/>
<rect x="488" y="203" width="5" height="1" fill="#f0324c"/>
<rect x="488" y="221" width="5" height="1" fill="#f0324c"/>
<rect x="488" y="203" width="1" height="19" fill="#f0324c"/>
<rect x="492" y="203" width="1" height="19" fill="#f0324c"/>
<rect x="496" y="192" width="1" height="8" fill="#f0324c"/>
<rect x="496" y="203" width="1" height="7" fill="#f0324c"/>
<rect x="494" y="200" width="5" height="1" fill="#f0324c"/>
<rect x="494" y="202" width="5" height="1" fill="#f0324c"/>
<rect x="494" y="200" width="1" height="3" fill="#f0324c"/>
<rect x="498" y="200" width="1" height="3" fill="#f0324c"/>
<rect x="502" y="194" width="1" height="6" fill="#3ec882"/>
<rect x="502" y="215" width="1" height="14" fill="#3ec882"/>
<rect x="500" y="200" width="5" height="15" fill="#3ec882"/>
<rect x="508" y="210" width="1" height="3" fill="#3ec882"/>
<rect x="508" y="234" width="1" height="3" fill="#3ec882"/>
<rect x="506" y="213" width="5" height="21" fill="#3ec882"/>
<rect x="514" y="229" width="1" height="5" fill="#3ec882"/>
<rect x="514" y="241" width="1" height="11" fill="#3ec882"/>
<rect x="512" y="234" width="5" height="7" fill="#3ec882"/>
<rect x="520" y="236" width="1" height="5" fill="#3ec882"/>
<rect x="520" y="258" width="1" height="3" fill="#3ec882"/>
<rect x="518" y="241" width="5" height="17" fill="#3ec882"/>
<rect x="526" y="248" width="1" height="10" fill="#3ec882"/>
<rect x="526" y="260" width="1" height="5" fill="#3ec882"/>
<rect x="524" y="258" width="5" height="2" fill="#3ec882"/>
<rect x="532" y="244" width="1" height="11" fill="#f0324c"/>
<rect x="532" y="259" width="1" height="15" fill="#f0324c"/>
<rect x="530" y="255" width="5" height="1" fill="#f0324c"/>
<rect x="530" y="258" width="5" height="1" fill="#f0324c"/>
<rect x="530" y="255" width="1" height="4" fill="#f0324c"/>
<rect x="534" y="255" width="1" height="4" fill="#f0324c"/>
<rect x="538" y="245" width="1" height="15" fill="#3ec882"/>
<rect x="538" y="262" width="1" height="9" fill="#3ec882"/>
<rect x="536" y="260" width="5" height="2" fill="#3ec882"/>
<rect x="544" y="243" width="1" height="20" fill="#3ec882"/>
<rect x="544" y="268" width="1" height="36" fill="#3ec882"/>
<rect x="542" y="263" width="5" height="5" fill="#3ec882"/>
<rect x="550" y="249" width="1" height="19" fill="#3ec882"/>
<rect x="550" y="275" width="1" height="5" fill="#3ec882"/>
<rect x="548" y="268" width="5" height="7" fill="#3ec882"/>
<rect x="556" y="255" width="1" height="11" fill="#f0324c"/>
<rect x="556" y="276" width="1" height="1" fill="#f0324c"/>
<rect x="554" y="266" width="5" height="1" fill="#f0324c"/>
<rect x="554" y="275" width="5" height="1" fill="#f0324c"/>
<rect x="554" y="266" width="1" height="10" fill="#f0324c"/>
<rect x="558" y="266" width="1" height="10" fill="#f0324c"/>
<rect x="562" y="264" width="1" height="3" fill="#3ec882"/>
<rect x="562" y="290" width="1" height="9" fill="#3ec882"/>
<rect x="560" y="267" width="5" height="23" fill="#3ec882"/>
<rect x="568" y="272" width="1" height="9" fill="#f0324c"/>
<rect x="568" y="290" width="1" height="6" fill="#f0324c"/>
<rect x="566" y="281" width="5" height="1" fill="#f0324c"/>
<rect x="566" y="289" width="5" height="1" fill="#f0324c"/>
<rect x="566" y="281" width="1" height="9" fill="#f0324c"/>
<rect x="570" y="281" width="1" height="9" fill="#f0324c"/>
<rect x="574" y="271" width="1" height="10" fill="#3ec882"/>
<rect x="574" y="288" width="1" height="11" fill="#3ec882"/>
<rect x="572" y="281" width="5" height="7" fill="#3ec882"/>
<rect x="580" y="281" width="1" height="7" fill="#3ec882"/>
<rect x="580" y="302" width="1" height="12" fill="#3ec882"/>
<rect x="578" y="288" width="5" height="14" fill="#3ec882"/>
<rect x="586" y="294" width="1" height="3" fill="#f0324c"/>
<rect x="586" y="301" width="1" height="11" fill="#f0324c"/>
<rect x="584" y="297" width="5" height="1" fill="#f0324c"/>
<rect x="584" y="300" width="5" height="1" fill="#f0324c"/>
<rect x="584" y="297" width="1" height="4" fill="#f0324c"/>
<rect x="588" y="297" width="1" height="4" fill="#f0324c"/>
<rect x="592" y="275" width="1" height="3" fill="#f0324c"/>
<rect x="592" y="295" width="1" height="12" fill="#f0324c"/>
<rect x="590" y="278" width="5" height="1" fill="#f0324c"/>
<rect x="590" y="294" width="5" height="1" fill="#f0324c"/>
<rect x="590" y="278" width="1" height="17" fill="#f0324c"/>
<rect x="594" y="278" width="1" height="17" fill="#f0324c"/>
<rect x="598" y="278" width="1" height="6" fill="#3ec882"/>
<rect x="598" y="297" width="1" height="2" fill="#3ec882"/>
<rect x="596" y="284" width="5" height="13" fill="#3ec882"/>
<rect x="604" y="282" width="1" height="10" fill="#f0324c"/>
<rect x="604" y="297" width="1" height="8" fill="#f0324c"/>
<rect x="602" y="292" width="5" height="1" fill="#f0324c"/>
<rect x="602" y="296" width="5" height="1" fill="#f0324c"/>
<rect x="602" y="292" width="1" height="5" fill="#f0324c"/>
<rect x="606" y="292" width="1" height="5" fill="#f0324c"/>
<rect x="610" y="273" width="1" height="8" fill="#f0324c"/>
<rect x="610" y="291" width="1" height="20" fill="#f0324c"/>
<rect x="608" y="281" width="5" height="1" fill="#f0324c"/>
<rect x="608" y="290" width="5" height="1" fill="#f0324c"/>
<rect x="608" y="281" width="1" height="10" fill="#f0324c"/>
<rect x="612" y="281" width="1" height="10" fill="#f0324c"/>
<rect x="616" y="241" width="1" height="19" fill="#f0324c"/>
<rect x="616" y="281" width="1" height="6" fill="#f0324c"/>
<rect x="614" y="260" width="5" height="1" fill="#f0324c"/>
<rect x="614" y="280" width="5" height="1" fill="#f0324c"/>
<rect x="614" y="260" width="1" height="21" fill="#f0324c"/>
<rect x="618" y="260" width="1" height="21" fill="#f0324c"/>
<rect x="622" y="253" width="1" height="7" fill="#3ec882"/>
<rect x="622" y="287" width="1" height="4" fill="#3ec882"/>
<rect x="620" y="260" width="5" height="27" fill="#3ec882"/>
<rect x="628" y="286" width="1" height="2" fill="#3ec882"/>
<rect x="628" y="301" width="1" height="10" fill="#3ec882"/>
<rect x="626" y="288" width="5" height="13" fill="#3ec882"/>
<rect x="634" y="281" width="1" height="5" fill="#f0324c"/>
<rect x="634" y="301" width="1" height="2" fill="#f0324c"/>
<rect x="632" y="286" width="5" height="1" fill="#f0324c"/>
<rect x="632" y="300" width="5" height="1" fill="#f0324c"/>
<rect x="632" y="286" width="1" height="15" fill="#f0324c"/>
<rect x="636" y="286" width="1" height="15" fill="#f0324c"/>
<rect x="211" y="53" width="7" height="1" fill="#ffffff"/>
<rect x="214" y="51" width="1" height="5" fill="#ffffff"/>
<rect x="109" y="162" width="7" height="1" fill="#ffffff"/>
<rect x="112" y="160" width="1" height="5" fill="#ffffff"/>
<rect x="367" y="80" width="7" height="1" fill="#ffffff"/>
<rect x="370" y="78" width="1" height="5" fill="#ffffff"/>
<rect x="577" y="315" width="7" height="1" fill="#ffffff"/>
<rect x="580" y="313" width="1" height="5" fill="#ffffff"/>
<rect x="91" y="285" width="3" height="1" fill="#f0a030"/>
<rect x="97" y="285" width="3" height="1" fill="#f0a030"/>
<rect x="103" y="285" width="3" height="1" fill="#f0a030"/>
<rect x="109" y="285" width="3" height="1" fill="#f0a030"/>
<rect x="115" y="285" width="3" height="1" fill="#f0a030"/>
<rect x="121" y="285" width="3" height="1" fill="#f0a030"/>
<rect x="127" y="285" width="3" height="1" fill="#f0a030"/>
<rect x="133" y="285" width="3" height="1" fill="#f0a030"/>
<rect x="139" y="285" width="3" height="1" fill="#f0a030"/>
<rect x="145" y="285" width="3" height="1" fill="#f0a030"/>
<rect x="151" y="285" width="3" height="1" fill="#f0a030"/>
<rect x="157" y="285" width="3" height="1" fill="#f0a030"/>
<rect x="163" y="285" width="3" height="1" fill="#f0a030"/>
<rect x="169" y="285" width="3" height="1" fill="#f0a030"/>
<rect x="175" y="285" width="3" height="1" fill="#f0a030"/>
<rect x="181" y="285" width="3" height="1" fill="#f0a030"/>
<rect x="187" y="285" width="3" height="1" fill="#f0a030"/>
<rect x="193" y="285" width="3" height="1" fill="#f0a030"/>
<rect x="199" y="285" width="3" height="1" fill="#f0a030"/>
<rect x="205" y="285" width="3" height="1" fill="#f0a030"/>
<rect x="211" y="285" width="3" height="1" fill="#f0a030"/>
<rect x="217" y="285" width="3" height="1" fill="#f0a030"/>
<rect x="223" y="285" width="3" height="1" fill="#f0a030"/>
<rect x="229" y="285" width="3" height="1" fill="#f0a030"/>
<rect x="235" y="285" width="3" height="1" fill="#f0a030"/>
<rect x="241" y="285" width="3" height="1" fill="#f0a030"/>
<rect x="247" y="285" width="3" height="1" fill="#f0a030"/>
<rect x="253" y="285" width="3" height="1" fill="#f0a030"/>
<rect x="259" y="285" width="3" height="1" fill="#f0a030"/>
<rect x="265" y="285" width="3" height="1" fill="#f0a030"/>
<rect x="271" y="285" width="3" height="1" fill="#f0a030"/>
<rect x="277" y="285" width="3" height="1" fill="#f0a030"/>
<rect x="283" y="285" width="3" height="1" fill="#f0a030"/>
<rect x="289" y="285" width="3" height="1" fill="#f0a030"/>
<rect x="295" y="285" width="3" height="1" fill="#f0a030"/>
<rect x="301" y="285" width="3" height="1" fill="#f0a030"/>
<rect x="307" y="285" width="3" height="1" fill="#f0a030"/>
<rect x="313" y="285" width="3" height="1" fill="#f0a030"/>
<rect x="319" y="285" width="3" height="1" fill="#f0a030"/>
<rect x="325" y="285" width="3" height="1" fill="#f0a030"/>
<rect x="331" y="285" width="3" height="1" fill="#f0a030"/>
<rect x="337" y="285" width="3" height="1" fill="#f0a030"/>
<rect x="343" y="285" width="3" height="1" fill="#f0a030"/>
<rect x="349" y="285" width="3" height="1" fill="#f0a030"/>
<rect x="355" y="285" width="3" height="1" fill="#f0a030"/>
<rect x="361" y="285" width="3" height="1" fill="#f0a030"/>
<rect x="367" y="285" width="3" height="1" fill="#f0a030"/>
<rect x="373" y="285" width="3" height="1" fill="#f0a030"/>
<rect x="379" y="285" width="3" height="1" fill="#f0a030"/>
<rect x="385" y="285" width="3" height="1" fill="#f0a030"/>
<rect x="391" y="285" width="3" height="1" fill="#f0a030"/>
<rect x="397" y="285" width="3" height="1" fill="#f0a030"/>
<rect x="403" y="285" width="3" height="1" fill="#f0a030"/>
<rect x="409" y="285" width="3" height="1" fill="#f0a030"/>
<rect x="415" y="285" width="3" height="1" fill="#f0a030"/>
<rect x="421" y="285" width="3" height="1" fill="#f0a030"/>
<rect x="427" y="285" width="3" height="1" fill="#f0a030"/>
<rect x="433" y="285" width="3" height="1" fill="#f0a030"/>
<rect x="439" y="285" width="3" height="1" fill="#f0a030"/>
<rect x="445" y="285" width="3" height="1" fill="#f0a030"/>
<rect x="451" y="285" width="3" height="1" fill="#f0a030"/>
<rect x="457" y="285" width="3" height="1" fill="#f0a030"/>
<rect x="463" y="285" width="3" height="1" fill="#f0a030"/>
<rect x="469" y="285" width="3" height="1" fill="#f0a030"/>
<rect x="475" y="285" width="3" height="1" fill="#f0a030"/>
<rect x="481" y="285" width="3" height="1" fill="#f0a030"/>
<rect x="487" y="285" width="3" height="1" fill="#f0a030"/>
<rect x="493" y="285" width="3" height="1" fill="#f0a030"/>
<rect x="499" y="285" width="3" height="1" fill="#f0a030"/>
<rect x="505" y="285" width="3" height="1" fill="#f0a030"/>
<rect x="511" y="285" width="3" height="1" fill="#f0a030"/>
<rect x="517" y="285" width="3" height="1" fill="#f0a030"/>
<rect x="523" y="285" width="3" height="1" fill="#f0a030"/>
<rect x="529" y="285" width="3" height="1" fill="#f0a030"/>
<rect x="535" y="285" width="3" height="1" fill="#f0a030"/>
<rect x="541" y="285" width="3" height="1" fill="#f0a030"/>
<rect x="547" y="285" width="3" height="1" fill="#f0a030"/>
<rect x="553" y="285" width="3" height="1" fill="#f0a030"/>
<rect x="559" y="285" width="3" height="1" fill="#f0a030"/>
<rect x="565" y="285" width="3" height="1" fill="#f0a030"/>
<rect x="571" y="285" width="3" height="1" fill="#f0a030"/>
<rect x="577" y="285" width="3" height="1" fill="#f0a030"/>
<rect x="583" y="285" width="3" height="1" fill="#f0a030"/>
<rect x="589" y="285" width="3" height="1" fill="#f0a030"/>
<rect x="595" y="285" width="3" height="1" fill="#f0a030"/>
<rect x="601" y="285" width="3" height="1" fill="#f0a030"/>
<rect x="607" y="285" width="3" height="1" fill="#f0a030"/>
<rect x="613" y="285" width="3" height="1" fill="#f0a030"/>
<rect x="619" y="285" width="3" height="1" fill="#f0a030"/>
<rect x="625" y="285" width="3" height="1" fill="#f0a030"/>
<rect x="631" y="285" width="3" height="1" fill="#f0a030"/>
<rect x="637" y="285" width="3" height="1" fill="#f0a030"/>
<rect x="643" y="285" width="3" height="1" fill="#f0a030"/>
<rect x="649" y="285" width="3" height="1" fill="#f0a030"/>
<rect x="655" y="285" width="3" height="1" fill="#f0a030"/>
<rect x="94" y="394" width="1" height="9" fill="#3ec882"/>
<rect x="100" y="394" width="1" height="14" fill="#3ec882"/>
<rect x="106" y="394" width="1" height="23" fill="#3ec882"/>
<rect x="112" y="394" width="1" height="30" fill="#3ec882"/>
<rect x="118" y="394" width="1" height="25" fill="#3ec882"/>
<rect x="124" y="394" width="1" height="20" fill="#3ec882"/>
<rect x="130" y="394" width="1" height="13" fill="#3ec882"/>
<rect x="136" y="394" width="1" height="12" fill="#3ec882"/>
<rect x="142" y="394" width="1" height="6" fill="#3ec882"/>
<rect x="148" y="394" width="1" height="2" fill="#3ec882"/>
<rect x="154" y="392" width="1" height="3" fill="#f0324c"/>
<rect x="160" y="389" width="1" height="6" fill="#f0324c"/>
<rect x="166" y="382" width="1" height="13" fill="#f0324c"/>
<rect x="172" y="376" width="1" height="19" fill="#f0324c"/>
<rect x="178" y="375" width="1" height="20" fill="#f0324c"/>
<rect x="184" y="379" width="1" height="16" fill="#f0324c"/>
<rect x="190" y="383" width="1" height="12" fill="#f0324c"/>
<rect x="196" y="381" width="1" height="14" fill="#f0324c"/>
<rect x="202" y="380" width="1" height="15" fill="#f0324c"/>
<rect x="208" y="380" width="1" height="15" fill="#f0324c"/>
<rect x="214" y="383" width="1" height="12" fill="#f0324c"/>
<rect x="220" y="383" width="1" height="12" fill="#f0324c"/>
<rect x="226" y="387" width="1" height="8" fill="#f0324c"/>
<rect x="232" y="394" width="1" height="1" fill="#3ec882"/>
<rect x="238" y="394" width="1" height="12" fill="#3ec882"/>
<rect x="244" y="394" width="1" height="18" fill="#3ec882"/>
<rect x="250" y="394" width="1" height="23" fill="#3ec882"/>
<rect x="256" y="394" width="1" height="18" fill="#3ec882"/>
<rect x="262" y="394" width="1" height="17" fill="#3ec882"/>
<rect x="268" y="394" width="1" height="14" fill="#3ec882"/>
<rect x="274" y="394" width="1" height="23" fill="#3ec882"/>
<rect x="280" y="394" width="1" height="34" fill="#3ec882"/>
<rect x="286" y="394" width="1" height="38" fill="#3ec882"/>
<rect x="292" y="394" width="1" height="31" fill="#3ec882"/>
<rect x="298" y="394" width="1" height="20" fill="#3ec882"/>
<rect x="304" y="394" width="1" height="11" fill="#3ec882"/>
<rect x="310" y="394" width="1" height="7" fill="#3ec882"/>
<rect x="316" y="394" width="1" height="1" fill="#f0324c"/>
<rect x="322" y="390" width="1" height="5" fill="#f0324c"/>
<rect x="328" y="388" width="1" height="7" fill="#f0324c"/>
<rect x="334" y="388" width="1" height="7" fill="#f0324c"/>
<rect x="340" y="382" width="1" height="13" fill="#f0324c"/>
<rect x="346" y="377" width="1" height="18" fill="#f0324c"/>
<rect x="352" y="369" width="1" height="26" fill="#f0324c"/>
<rect x="358" y="366" width="1" height="29" fill="#f0324c"/>
<rect x="364" y="361" width="1" height="34" fill="#f0324c"/>
<rect x="370" y="358" width="1" height="37" fill="#f0324c"/>
<rect x="376" y="358" width="1" height="37" fill="#f0324c"/>
<rect x="382" y="364" width="1" height="31" fill="#f0324c"/>
<rect x="388" y="368" width="1" height="27" fill="#f0324c"/>
<rect x="394" y="372" width="1" height="23" fill="#f0324c"/>
<rect x="400" y="377" width="1" height="18" fill="#f0324c"/>
<rect x="406" y="378" width="1" height="17" fill="#f0324c"/>
<rect x="412" y="388" width="1" height="7" fill="#f0324c"/>
<rect x="418" y="394" width="1" height="3" fill="#3ec882"/>
<rect x="424" y="394" width="1" height="11" fill="#3ec882"/>
<rect x="430" y="394" width="1" height="11" fill="#3ec882"/>
<rect x="436" y="394" width="1" height="24" fill="#3ec882"/>
<rect x="442" y="394" width="1" height="32" fill="#3ec882"/>
<rect x="448" y="394" width="1" height="30" fill="#3ec882"/>
<rect x="454" y="394" width="1" height="27" fill="#3ec882"/>
<rect x="460" y="394" width="1" height="36" fill="#3ec882"/>
<rect x="466" y="394" width="1" height="41" fill="#3ec882"/>
<rect x="472" y="394" width="1" height="39" fill="#3ec882"/>
<rect x="478" y="394" width="1" height="36" fill="#3ec882"/>
<rect x="484" y="394" width="1" height="29" fill="#3ec882"/>
<rect x="490" y="394" width="1" height="20" fill="#3ec882"/>
<rect x="496" y="394" width="1" height="12" fill="#3ec882"/>
<rect x="502" y="394" width="1" height="8" fill="#3ec882"/>
<rect x="508" y="394" width="1" height="9" fill="#3ec882"/>
<rect x="514" y="394" width="1" height="10" fill="#3ec882"/>
<rect x="520" y="394" width="1" height="14" fill="#3ec882"/>
<rect x="526" y="394" width="1" height="15" fill="#3ec882"/>
<rect x="532" y="394" width="1" height="13" fill="#3ec882"/>
<rect x="538" y="394" width="1" height="12" fill="#3ec882"/>
<rect x="544" y="394" width="1" height="11" fill="#3ec882"/>
<rect x="550" y="394" width="1" height="11" fill="#3ec882"/>
<rect x="556" y="394" width="1" height="7" fill="#3ec882"/>
<rect x="562" y="394" width="1" height="9" fill="#3ec882"/>
<rect x="568" y="394" width="1" height="7" fill="#3ec882"/>
<rect x="574" y="394" width="1" height="6" fill="#3ec882"/>
<rect x="580" y="394" width="1" height="7" fill="#3ec882"/>
<rect x="586" y="394" width="1" height="5" fill="#3ec882"/>
<rect x="592" y="392" width="1" height="3" fill="#f0324c"/>
<rect x="598" y="392" width="1" height="3" fill="#f0324c"/>
<rect x="604" y="390" width="1" height="5" fill="#f0324c"/>
<rect x="610" y="385" width="1" height="10" fill="#f0324c"/>
<rect x="616" y="378" width="1" height="17" fill="#f0324c"/>
<rect x="622" y="379" width="1" height="16" fill="#f0324c"/>
<rect x="628" y="382" width="1" height="13" fill="#f0324c"/>
<rect x="634" y="381" width="1" height="14" fill="#f0324c"/>
<polyline points="94.5,397.3 100.5,398.3 106.5,401.5 112.5,405.0 118.5,408.4 124.5,410.5 130.5,411.7 136.5,413.4 142.5,413.7 148.5,413.7 154.5,413.7 160.5,413.4 166.5,411.3 172.5,408.4 178.5,405.9 184.5,404.0 190.5,403.0 196.5,401.7 202.5,399.8 208.5,398.4 214.5,396.5 220.5,395.2 226.5,394.4 232.5,395.1 238.5,396.8 244.5,398.9 250.5,401.7 256.5,403.4 262.5,405.5 268.5,407.1 274.5,409.0 280.5,413.5 286.5,417.9 292.5,422.5 298.5,424.6 304.5,425.8 310.5,426.5 316.5,426.0 322.5,425.8 328.5,425.8 334.5,424.6 340.5,422.2 346.5,419.3 352.5,415.7 358.5,412.0 364.5,407.0 370.5,402.0 376.5,398.0 382.5,395.4 388.5,393.3 394.5,390.4 400.5,388.0 406.5,386.0 412.5,386.0 418.5,386.5 424.5,387.5 430.5,388.5 436.5,391.8 442.5,396.2 448.5,399.8 454.5,402.7 460.5,407.0 466.5,411.3 472.5,417.1 478.5,421.7 484.5,424.3 490.5,426.9 496.5,428.3 502.5,429.3 508.5,430.3 514.5,431.7 520.5,433.2 526.5,434.3 532.5,436.0 538.5,437.2 544.5,438.4 550.5,440.1 556.5,440.4 562.5,441.8 568.5,443.0 574.5,444.0 580.5,444.5 586.5,444.7 592.5,444.2 598.5,443.7 604.5,442.3 610.5,440.8 616.5,439.4 622.5,437.5 628.5,436.5 634.5,435.0" fill="none" stroke="#e6dc28" stroke-width="1"/>
<polyline points="94.5,400.8 100.5,403.6 106.5,411.6 112.5,419.2 118.5,420.4 124.5,419.5 130.5,417.5 136.5,418.5 142.5,416.3 148.5,414.6 154.5,412.7 160.5,410.5 166.5,405.5 172.5,401.2 178.5,397.8 184.5,397.5 190.5,397.1 196.5,395.5 202.5,393.3 208.5,391.5 214.5,391.5 220.5,390.2 226.5,391.0 232.5,394.6 238.5,401.7 244.5,406.9 250.5,412.5 256.5,411.3 262.5,413.2 268.5,413.4 274.5,419.8 280.5,428.0 286.5,437.5 292.5,435.2 298.5,432.3 304.5,429.4 310.5,427.2 316.5,425.0 322.5,423.6 328.5,422.2 334.5,421.1 340.5,416.8 346.5,412.0 352.5,405.8 358.5,399.8 364.5,394.0 370.5,386.8 376.5,382.4 382.5,381.0 388.5,380.3 394.5,379.6 400.5,380.3 406.5,378.8 412.5,381.0 418.5,386.0 424.5,392.3 430.5,393.3 436.5,402.7 442.5,410.6 448.5,413.5 454.5,416.4 460.5,425.8 466.5,433.0 472.5,435.9 478.5,438.0 484.5,438.0 490.5,435.6 496.5,433.2 502.5,432.2 508.5,434.0 514.5,435.8 520.5,437.9 526.5,440.4 532.5,441.8 538.5,443.0 544.5,443.7 550.5,444.4 556.5,444.7 562.5,444.4 568.5,445.2 574.5,444.9 580.5,444.5 586.5,444.2 592.5,443.5 598.5,442.3 604.5,440.4 610.5,435.8 616.5,431.7 622.5,430.3 628.5,430.3 634.5,428.5" fill="none" stroke="#e8e8e8" stroke-width="1"/>
<polyline points="94.5,509.4 100.5,509.4 106.5,514.3 112.5,515.4 118.5,509.7 124.5,508.2 130.5,506.0 136.5,508.9 142.5,505.3 148.5,506.5 154.5,506.8 160.5,505.3 166.5,501.7 172.5,499.3 178.5,501.3 184.5,504.6 190.5,505.3 196.5,501.3 202.5,501.0 208.5,501.3 214.5,503.6 220.5,501.7 226.5,503.6 232.5,507.5 238.5,512.5 244.5,511.4 250.5,513.3 256.5,507.9 262.5,508.9 268.5,507.9 274.5,514.7 280.5,520.1 286.5,516.9 292.5,512.5 298.5,508.9 304.5,507.5 310.5,510.4 316.5,507.5 322.5,508.2 328.5,509.4 334.5,508.9 340.5,505.3 346.5,503.9 352.5,499.3 358.5,501.0 364.5,498.1 370.5,496.4 376.5,498.1 382.5,500.3 388.5,499.3 394.5,499.6 400.5,501.0 406.5,498.1 412.5,504.6 418.5,506.0 424.5,508.5 430.5,505.0 436.5,513.3 442.5,513.3 448.5,509.7 454.5,509.7 460.5,516.2 466.5,517.6 472.5,514.7 478.5,514.3 484.5,513.3 490.5,510.4 496.5,508.9 502.5,511.8 508.5,514.3 514.5,515.4 520.5,517.2 526.5,517.6 532.5,516.2 538.5,517.6 544.5,518.6 550.5,519.5 556.5,517.2 562.5,520.5 568.5,518.3 574.5,519.6 580.5,520.5 586.5,518.9 592.5,515.2 598.5,517.6 604.5,516.2 610.5,514.0 616.5,509.4 622.5,512.8 628.5,516.2 634.5,512.3" fill="none" stroke="#e030e8" stroke-width="1"/>
<polyline points="94.5,515.4 100.5,513.3 106.5,521.5 112.5,523.4 118.5,511.1 124.5,508.9 130.5,506.0 136.5,512.8 142.5,504.6 148.5,504.6 154.5,505.3 160.5,503.9 166.5,496.7 172.5,491.6 178.5,495.9 184.5,503.9 190.5,504.2 196.5,497.0 202.5,496.4 208.5,496.4 214.5,501.7 220.5,497.4 226.5,503.2 232.5,510.4 238.5,519.5 244.5,519.5 250.5,523.4 256.5,507.9 262.5,512.3 268.5,508.5 274.5,521.2 280.5,529.2 286.5,521.2 292.5,512.9 298.5,507.9 304.5,506.5 310.5,509.4 316.5,506.0 322.5,506.8 328.5,508.5 334.5,508.5 340.5,500.3 346.5,499.3 352.5,490.9 358.5,494.1 364.5,487.3 370.5,485.4 376.5,489.4 382.5,495.5 388.5,494.5 394.5,494.5 400.5,499.6 406.5,491.6 412.5,506.0 418.5,508.2 424.5,514.0 430.5,505.0 436.5,520.1 442.5,520.5 448.5,512.5 454.5,513.3 460.5,523.4 466.5,525.5 472.5,520.9 478.5,520.5 484.5,518.3 490.5,511.4 496.5,509.7 502.5,514.0 508.5,518.3 514.5,520.5 520.5,524.1 526.5,525.3 532.5,522.4 538.5,524.4 544.5,525.5 550.5,527.0 556.5,523.4 562.5,528.4 568.5,522.7 574.5,524.5 580.5,528.3 586.5,524.1 592.5,514.2 598.5,520.1 604.5,516.9 610.5,513.7 616.5,502.7 622.5,511.8 628.5,516.2 634.5,511.8" fill="none" stroke="#e6dc28" stroke-width="1"/>
<polyline points="94.5,526.3 100.5,521.2 106.5,535.0 112.5,537.1 118.5,513.3 124.5,508.2 130.5,500.7 136.5,513.3 142.5,498.1 148.5,499.6 154.5,501.3 160.5,497.4 166.5,484.4 172.5,475.7 178.5,487.3 184.5,505.3 190.5,507.8 196.5,490.2 202.5,490.2 208.5,490.2 214.5,501.7 220.5,492.3 226.5,503.2 232.5,518.3 238.5,534.9 244.5,534.2 250.5,537.8 256.5,505.3 262.5,512.5 268.5,508.5 274.5,529.9 280.5,537.8 286.5,525.5 292.5,512.2 298.5,500.7 304.5,498.4 310.5,507.9 316.5,499.3 322.5,500.7 328.5,505.3 334.5,507.9 340.5,488.7 346.5,485.8 352.5,473.6 358.5,482.2 364.5,471.8 370.5,469.2 376.5,480.8 382.5,492.3 388.5,490.4 394.5,490.2 400.5,501.0 406.5,486.6 412.5,516.9 418.5,519.8 424.5,529.2 430.5,505.3 436.5,531.3 442.5,531.3 448.5,516.6 454.5,516.9 460.5,533.5 466.5,535.7 472.5,524.8 478.5,524.4 484.5,519.0 490.5,503.5 496.5,502.4 502.5,511.8 508.5,523.4 514.5,527.0 520.5,532.8 526.5,534.2 532.5,527.7 538.5,531.3 544.5,534.2 550.5,537.8 556.5,523.0 562.5,536.4 568.5,522.7 574.5,526.7 580.5,534.2 586.5,524.3 592.5,504.4 598.5,515.4 604.5,511.1 610.5,498.8 616.5,486.3 622.5,507.5 628.5,515.1 634.5,505.0" fill="none" stroke="#e8e8e8" stroke-width="1"/>
<rect x="160" y="540" width="1" height="4" fill="#333333"/>
<rect x="292" y="540" width="1" height="4" fill="#333333"/>
<rect x="418" y="540" width="1" height="4" fill="#333333"/>
<rect x="550" y="540" width="1" height="4" fill="#333333"/>
<rect x="661.5" y="285.5" width="68" height="17" fill="#000" stroke="#f0a030" stroke-width="1"/>
<polygon points="721,283 725,278 729,283" fill="#f0a030"/>
<polygon points="721,286 725,281 729,286" fill="#f0a030"/>
<rect x="28" y="447" width="1" height="2" fill="#ff1010"/>
<rect x="28" y="459" width="1" height="2" fill="#ff1010"/>
<rect x="22" y="453" width="2" height="1" fill="#ff1010"/>
<rect x="34" y="453" width="2" height="1" fill="#ff1010"/>
<rect x="23" y="448" width="1" height="1" fill="#ff1010"/>
<rect x="24" y="449" width="1" height="1" fill="#ff1010"/>
<rect x="33" y="449" width="1" height="1" fill="#ff1010"/>
<rect x="34" y="448" width="1" height="1" fill="#ff1010"/>
<rect x="23" y="459" width="1" height="1" fill="#ff1010"/>
<rect x="24" y="458" width="1" height="1" fill="#ff1010"/>
<rect x="33" y="458" width="1" height="1" fill="#ff1010"/>
<rect x="34" y="459" width="1" height="1" fill="#ff1010"/>
<g shape-rendering="geometricPrecision"><circle cx="28.5" cy="453.5" r="3.6" fill="#ffffff"/><circle cx="28.5" cy="453.5" r="2" fill="#ff0000"/></g>
<rect x="520.5" y="0.5" width="74" height="15" fill="none" stroke="#7a7a7a"/>
<polygon points="576.5,4.5 585.5,4.5 581,12.5" fill="#9a9a9a" shape-rendering="geometricPrecision"/>
<rect x="598.5" y="1.5" width="13" height="13" fill="none" stroke="#9a9a9a"/>
<rect x="614.5" y="1.5" width="13" height="13" fill="none" stroke="#9a9a9a"/>
<rect x="630.5" y="1.5" width="13" height="13" fill="none" stroke="#9a9a9a"/>
<rect x="646.5" y="1.5" width="13" height="13" fill="none" stroke="#9a9a9a"/>
<rect x="604" y="3" width="2" height="3" fill="#a8a8a8"/>
<rect x="604" y="7" width="2" height="2" fill="#a8a8a8"/>
<rect x="604" y="10" width="2" height="3" fill="#a8a8a8"/>
<rect x="600" y="7" width="3" height="2" fill="#a8a8a8"/>
<rect x="607" y="7" width="3" height="2" fill="#a8a8a8"/>
<rect x="617" y="3" width="1" height="10" fill="#a8a8a8"/>
<rect x="616" y="4" width="3" height="1" fill="#a8a8a8"/>
<rect x="617" y="12" width="9" height="1" fill="#a8a8a8"/>
<rect x="624" y="11" width="1" height="3" fill="#a8a8a8"/>
<rect x="616" y="11" width="1" height="1" fill="#a8a8a8"/>
<rect x="620" y="4" width="1" height="6" fill="#a8a8a8"/>
<polygon points="621,7 624,4 624,10" fill="#a8a8a8"/>
<rect x="633" y="3" width="1" height="10" fill="#a8a8a8"/>
<rect x="632" y="4" width="3" height="1" fill="#a8a8a8"/>
<rect x="633" y="12" width="9" height="1" fill="#a8a8a8"/>
<rect x="640" y="11" width="1" height="3" fill="#a8a8a8"/>
<rect x="632" y="11" width="1" height="1" fill="#a8a8a8"/>
<polygon points="635,4 640,7.5 635,11" fill="#a8a8a8"/>
<rect x="649" y="3" width="4" height="1" fill="#a8a8a8"/>
<rect x="649" y="12" width="4" height="1" fill="#a8a8a8"/>
<rect x="649" y="3" width="1" height="10" fill="#a8a8a8"/>
<rect x="652" y="3" width="1" height="10" fill="#a8a8a8"/>
<rect x="653" y="7" width="3" height="2" fill="#a8a8a8"/>
<polygon points="655,4.5 658,8 655,11.5" fill="#a8a8a8"/>
</svg>
<div style="position:absolute;left:20px;top:559px;width:39px;height:15px;background:#464852"></div><div style="position:absolute;left:19px;top:574px;width:558px;height:1px;background:#121212"></div>
<div style="position:absolute;left:59px;top:560px;width:1px;height:15px;background:#262626"></div><div style="position:absolute;left:99px;top:560px;width:1px;height:15px;background:#262626"></div><div style="position:absolute;left:158px;top:560px;width:1px;height:15px;background:#262626"></div><div style="position:absolute;left:186px;top:560px;width:1px;height:15px;background:#262626"></div><div style="position:absolute;left:225px;top:560px;width:1px;height:15px;background:#262626"></div><div style="position:absolute;left:266px;top:560px;width:1px;height:15px;background:#262626"></div><div style="position:absolute;left:299px;top:560px;width:1px;height:15px;background:#262626"></div><div style="position:absolute;left:334px;top:560px;width:1px;height:15px;background:#262626"></div><div style="position:absolute;left:373px;top:560px;width:1px;height:15px;background:#262626"></div><div style="position:absolute;left:407px;top:560px;width:1px;height:15px;background:#262626"></div><div style="position:absolute;left:435px;top:560px;width:1px;height:15px;background:#262626"></div><div style="position:absolute;left:469px;top:560px;width:1px;height:15px;background:#262626"></div><div style="position:absolute;left:509px;top:560px;width:1px;height:15px;background:#262626"></div><div style="position:absolute;left:538px;top:560px;width:1px;height:15px;background:#262626"></div><div style="position:absolute;left:577px;top:560px;width:1px;height:15px;background:#262626"></div>
<svg style="position:absolute;left:0;top:0" width="731" height="575"><polygon points="65,554 69,546 73.5,554" fill="#f0b050"/></svg>
<div class="t" style="right:644px;top:14.0px;color:#ff2e46;font-size:12.4px;">1.4003</div><div class="t" style="left:664px;top:14.0px;color:#ff2e46;font-size:12.4px;">1.4003</div><div class="t" style="right:644px;top:76.0px;color:#ff2e46;font-size:12.4px;">1.3823</div><div class="t" style="left:664px;top:76.0px;color:#ff2e46;font-size:12.4px;">1.3823</div><div class="t" style="right:644px;top:139.0px;color:#ff2e46;font-size:12.4px;">1.3643</div><div class="t" style="left:664px;top:139.0px;color:#ff2e46;font-size:12.4px;">1.3643</div><div class="t" style="right:644px;top:202.0px;color:#ff2e46;font-size:12.4px;">1.3464</div><div class="t" style="left:664px;top:202.0px;color:#ff2e46;font-size:12.4px;">1.3464</div><div class="t" style="right:644px;top:265.0px;color:#ff2e46;font-size:12.4px;">1.3284</div><div class="t" style="left:664px;top:265.0px;color:#ff2e46;font-size:12.4px;">1.3284</div><div class="t" style="right:644px;top:349.3px;color:#ff2e46;font-size:12.4px;">0.0064</div><div class="t" style="left:664px;top:349.3px;color:#ff2e46;font-size:12.4px;">0.0064</div><div class="t" style="right:644px;top:379.4px;color:#ff2e46;font-size:12.4px;">0.0013</div><div class="t" style="left:664px;top:379.4px;color:#ff2e46;font-size:12.4px;">0.0013</div><div class="t" style="right:644px;top:409.5px;color:#ff2e46;font-size:12.4px;">-0.0038</div><div class="t" style="left:664px;top:409.5px;color:#ff2e46;font-size:12.4px;">-0.0038</div><div class="t" style="right:644px;top:461.0px;color:#ff2e46;font-size:12.4px;">78.0901</div><div class="t" style="left:664px;top:461.0px;color:#ff2e46;font-size:12.4px;">78.0901</div><div class="t" style="right:644px;top:484.0px;color:#ff2e46;font-size:12.4px;">58.2670</div><div class="t" style="left:664px;top:484.0px;color:#ff2e46;font-size:12.4px;">58.2670</div><div class="t" style="right:644px;top:508.0px;color:#ff2e46;font-size:12.4px;">38.4440</div><div class="t" style="left:664px;top:508.0px;color:#ff2e46;font-size:12.4px;">38.4440</div><div class="t" style="left:664px;top:287.0px;color:#f0a030;font-size:12.4px;">1.3248</div><div class="t" style="left:218.6px;top:39.3px;color:#f0324c;font-size:12.4px;font-weight:bold;">1.3913</div><div class="t" style="left:116.7px;top:162.8px;color:#3ec882;font-size:12.4px;font-weight:bold;">1.3602</div><div class="t" style="left:374.9px;top:66.3px;color:#f0324c;font-size:12.4px;font-weight:bold;">1.3835</div><div class="t" style="left:285.4px;top:229.0px;color:#3ec882;font-size:12.4px;font-weight:bold;">1.3412</div><div class="t" style="left:585px;top:315.8px;color:#3ec882;font-size:12.4px;font-weight:bold;">1.3163</div><div class="t" style="left:92px;top:3px;font-size:12px;color:#f0f0f0">英镑美元<span style="color:#f0b050;letter-spacing:1px">&lt;日线&gt;</span></div><div class="t" style="left:527px;top:1px;font-size:12px;color:#a8a8a8">全部主题</div><div class="t" style="left:91.5px;top:337.5px;color:#e8e8e8;font-size:12px;">MACD(26,12,9)</div><div class="t" style="left:182.5px;top:337.5px;color:#e8e8e8;font-size:12px;">DIFF:-0.0058</div><div class="t" style="left:261.5px;top:337.5px;color:#d8d030;font-size:12px;">DEA:-0.0069</div><div class="t" style="left:339.5px;top:337.5px;color:#d030d8;font-size:12px;">MACD:0.0022</div><div class="t" style="left:91.5px;top:449.5px;color:#e8e8e8;font-size:12px;">RSI(6,12,24)</div><div class="t" style="left:164.5px;top:449.5px;color:#e8e8e8;font-size:12px;">RSI1:48.2323</div><div class="t" style="left:246px;top:449.5px;color:#d8d030;font-size:12px;">RSI2:43.7342</div><div class="t" style="left:328px;top:449.5px;color:#d030d8;font-size:12px;">RSI3:41.5531</div><div class="t" style="left:162.3px;top:541.0px;color:#b8bcc4;font-size:12.4px;font-weight:bold;">2021/09</div><div class="t" style="left:294.2px;top:541.0px;color:#b8bcc4;font-size:12.4px;font-weight:bold;">2021/10</div><div class="t" style="left:420px;top:541.0px;color:#b8bcc4;font-size:12.4px;font-weight:bold;">2021/11</div><div class="t" style="left:552.5px;top:541.0px;color:#b8bcc4;font-size:12.4px;font-weight:bold;">2021/12</div><div class="t" style="left:2.5px;top:6px;font-size:12.5px;line-height:14px;width:14px;text-align:center;color:#bdbdbd;">分<br>时<br>图</div><div class="t" style="left:2.5px;top:55px;font-size:12.5px;line-height:14px;width:14px;text-align:center;color:#ffffff;"><span style="font-family:'Liberation Serif';font-size:11.5px;font-weight:bold;display:inline-block;transform:scaleX(0.75)">K</span><br>线<br>图</div><div class="t" style="left:2.5px;top:104px;font-size:12.5px;line-height:14px;width:14px;text-align:center;color:#bdbdbd;">闪<br>电<br>图</div><div class="t" style="left:2.5px;top:155px;font-size:12.5px;line-height:14px;width:14px;text-align:center;color:#bdbdbd;">合<br>约<br>资<br>料</div><div class="t" style="left:34px;top:543px;font-size:12px;font-weight:bold;color:#f0c050;-webkit-text-stroke:0.2px #f0c050">日线</div><div class="t" style="left:20px;width:39px;text-align:center;top:561px;font-size:12.5px;color:#ffffff;">指标</div><div class="t" style="left:59px;width:41px;text-align:center;top:561px;font-size:12.5px;color:#c0c0c0;">模板</div><div class="t" style="left:99px;width:59px;text-align:center;top:560px;font-size:12px;color:#f0b040;"><span style="font-family:'Liberation Mono',monospace;font-size:11px">VIP</span>指标</div><div class="t" style="left:158px;width:28px;text-align:center;top:561px;font-size:10px;color:#dadada;font-family:'Liberation Mono', monospace;">MA</div><div class="t" style="left:186px;width:39px;text-align:center;top:561px;font-size:10px;color:#dadada;font-family:'Liberation Mono', monospace;">MACD</div><div class="t" style="left:225px;width:41px;text-align:center;top:561px;font-size:10px;color:#dadada;font-family:'Liberation Mono', monospace;">BIAS</div><div class="t" style="left:266px;width:33px;text-align:center;top:561px;font-size:10px;color:#dadada;font-family:'Liberation Mono', monospace;">CCI</div><div class="t" style="left:299px;width:35px;text-align:center;top:561px;font-size:10px;color:#dadada;font-family:'Liberation Mono', monospace;">KDJ</div><div class="t" style="left:334px;width:39px;text-align:center;top:561px;font-size:10px;color:#dadada;font-family:'Liberation Mono', monospace;">LW&amp;</div><div class="t" style="left:373px;width:34px;text-align:center;top:561px;font-size:10px;color:#dadada;font-family:'Liberation Mono', monospace;">RSI</div><div class="t" style="left:407px;width:28px;text-align:center;top:561px;font-size:10px;color:#dadada;font-family:'Liberation Mono', monospace;">CR</div><div class="t" style="left:435px;width:34px;text-align:center;top:561px;font-size:10px;color:#dadada;font-family:'Liberation Mono', monospace;">PSY</div><div class="t" style="left:469px;width:40px;text-align:center;top:561px;font-size:10px;color:#dadada;font-family:'Liberation Mono', monospace;">BOLL</div><div class="t" style="left:509px;width:29px;text-align:center;top:561px;font-size:10px;color:#dadada;font-family:'Liberation Mono', monospace;">&gt;&gt;</div><div class="t" style="left:538px;width:39px;text-align:center;top:561px;font-size:12.5px;color:#c8c8c8;">设置</div>
</div></body></html>
